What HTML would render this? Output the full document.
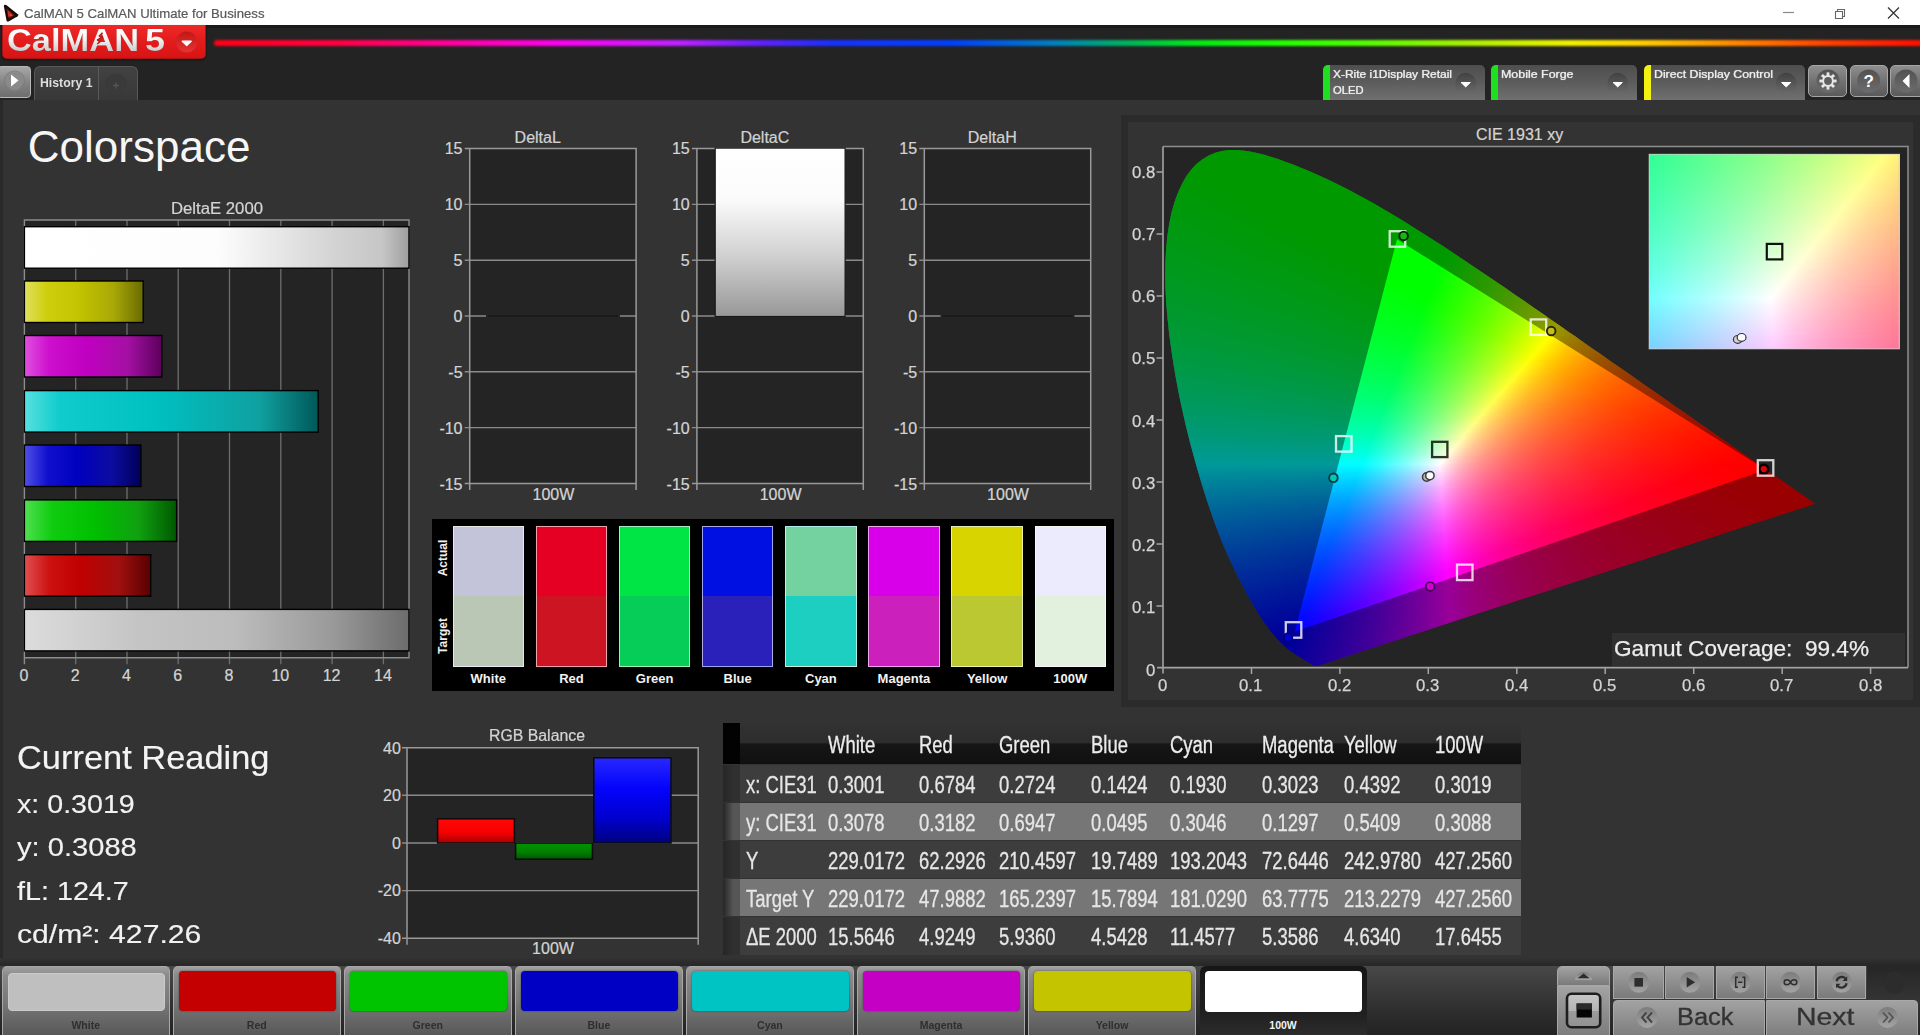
<!DOCTYPE html>
<html><head><meta charset="utf-8"><title>CalMAN 5</title><style>
html,body{margin:0;padding:0}
body{width:1920px;height:1035px;overflow:hidden;background:#333;position:relative;font-family:"Liberation Sans",sans-serif}
.a{position:absolute;box-sizing:border-box}
.t{position:absolute;white-space:nowrap;transform-origin:0 0;display:block;-webkit-text-stroke:.22px currentColor}
svg{position:absolute;left:0;top:0;overflow:visible}
.cie i{position:absolute;display:block}
</style></head>
<body>
<div class="a " style="left:0.0px;top:0.0px;width:1920.0px;height:25.0px;background:#fff"></div>
<svg width="1920" height="30"><path d="M3.8 6 Q4 4 6.3 5 L17.8 14.3 Q19 15.4 17.6 16.3 L8.6 21.5 Q7 22 6.5 20.4 Z" fill="#1c0a08"/><path d="M6.3 8 L14.8 15.2 L8.8 18.8 Z" fill="#6a1810"/><path d="M7.8 10.5l2.8 2.2-1 3.4-1.6 1z" fill="#d03020"/><path d="M10.2 13.2l2.6 2-3 1.6z" fill="#e85030"/><path d="M1783 12.5h11" stroke="#8a8a8a" stroke-width="1.2" fill="none"/><path d="M1835.5 11.5h7v7h-7z M1837.5 11.5v-2h7v7h-2" stroke="#666" stroke-width="1.1" fill="none"/><path d="M1888 7.5l11 11M1899 7.5l-11 11" stroke="#333" stroke-width="1.2" fill="none"/></svg>
<span class="t" style="left:24.0px;top:6.8px;font-size:13.3px;line-height:13.3px;color:#5a5a5a;transform:scaleX(0.9891);">CalMAN 5 CalMAN Ultimate for Business</span>
<div class="a " style="left:0.0px;top:25.0px;width:1920.0px;height:74.5px;background:#232323;border-top:3px solid #1a1a1a"></div>
<div class="a " style="left:214.0px;top:39.5px;width:1716.0px;height:6.5px;background:linear-gradient(90deg,#ff0018 0,#ff0040 7%,#ff00a0 14%,#ff00f0 20%,#c020ff 27%,#6020ff 32%,#1830ff 36%,#0040ff 43%,#0080c0 49%,#00b060 53%,#00e818 57%,#20ff00 62%,#50ff00 67%,#a8f000 73%,#f0f000 79%,#ffd000 83%,#ff9000 88%,#ff4000 94%,#ff0800 100%);filter:blur(1.1px);border-radius:3px"></div>
<div class="a " style="left:2.0px;top:25.0px;width:204.0px;height:34.0px;background:linear-gradient(#ee2828,#e41c1c 45%,#d81414);border-radius:0 0 5px 5px;border:1px solid #a81212;border-top:none;box-shadow:0 1px 2px rgba(0,0,0,.6)"></div>
<span class="t" style="left:7.0px;top:25.2px;font-size:31px;line-height:31px;color:rgba(80,0,0,.55);font-weight:bold;-webkit-text-stroke:0;transform:scaleX(1.1107);-webkit-text-stroke:0;">CalMAN</span>
<span class="t" style="left:145.0px;top:25.2px;font-size:31px;line-height:31px;color:rgba(80,0,0,.55);font-weight:bold;-webkit-text-stroke:0;transform:scaleX(1.1599);-webkit-text-stroke:0;">5</span>
<span class="t" style="left:7.0px;top:24.5px;font-size:31px;line-height:31px;color:transparent;font-weight:bold;-webkit-text-stroke:0;transform:scaleX(1.1107);background:linear-gradient(#fff 15%,#f4f4f4 45%,#c8c8c8 88%);-webkit-background-clip:text;background-clip:text;-webkit-text-stroke:0;">CalMAN</span>
<span class="t" style="left:145.0px;top:24.5px;font-size:31px;line-height:31px;color:transparent;font-weight:bold;-webkit-text-stroke:0;transform:scaleX(1.1599);background:linear-gradient(#fff 15%,#f4f4f4 45%,#c8c8c8 88%);-webkit-background-clip:text;background-clip:text;-webkit-text-stroke:0;">5</span>
<svg width="220" height="70"><defs><linearGradient id="lr" x1="0" y1="0" x2="0" y2="1"><stop offset="0" stop-color="#c41616"/><stop offset="1" stop-color="#e43434"/></linearGradient></defs><circle cx="186.7" cy="42" r="10.6" fill="url(#lr)"/><path d="M182.2 41.2l4.5 4.4 4.5-4.4z" fill="#fff" stroke="#fff" stroke-width="1.2" stroke-linejoin="round"/><path d="M102.6 32.8l-3.4 3.2 3.2 1.2-5 2.8 3 1.4-3.2 2.6" stroke="#b41c1c" stroke-width="1.5" fill="none" stroke-linejoin="round"/></svg>
<div class="a " style="left:-3.0px;top:65.5px;width:34.0px;height:32.0px;background:linear-gradient(#a8a8a8,#858585 50%,#6e6e6e);border:1px solid #b8b8b8;border-radius:4px"></div>
<svg width="40" height="100"><circle cx="14.5" cy="81" r="10.5" fill="#7c7c7c"/><circle cx="14.5" cy="80.3" r="9.5" fill="#8a8a8a"/><path d="M11 74.5l7.5 6-7.5 6z" fill="#fff"/></svg>
<div class="a " style="left:34.0px;top:65.5px;width:103.5px;height:34.0px;background:linear-gradient(#424242,#383838);border:1.5px solid #585858;border-bottom:none;border-radius:6px 6px 0 0"></div>
<div class="a " style="left:97.5px;top:66.5px;width:1.5px;height:33.0px;background:#5a5a5a"></div>
<span class="t" style="left:40.0px;top:77.0px;font-size:12.5px;line-height:12.5px;color:#dedede;font-weight:bold;-webkit-text-stroke:0;transform:scaleX(0.9814);">History 1</span>
<svg width="140" height="100"><circle cx="116" cy="84" r="10.5" fill="#3a3a3a"/><path d="M113 85.5h6M116 82.5v6" stroke="#555" stroke-width="1.3"/></svg>
<svg width="0" height="0"><defs><linearGradient id="cg" x1="0" y1="0" x2="0" y2="1"><stop offset="0" stop-color="#414141"/><stop offset="1" stop-color="#6a6a6a"/></linearGradient><linearGradient id="cg2" x1="0" y1="0" x2="0" y2="1"><stop offset="0" stop-color="#525252"/><stop offset="1" stop-color="#6c6c6c"/></linearGradient></defs></svg>
<div class="a " style="left:1323.3px;top:65.0px;width:161.4px;height:34.5px;background:linear-gradient(#4e4e4e,#5c5c5c 50%,#707070);border-radius:5px 5px 0 0;overflow:hidden"><div class="a" style="left:0;top:0;width:7px;height:35px;background:#1ee01e"></div></div>
<span class="t" style="left:1333.3px;top:68.9px;font-size:11.5px;line-height:11.5px;color:#eee;transform:scaleX(1.0403);text-shadow:0 0 1px #fff8;">X-Rite i1Display Retail</span>
<span class="t" style="left:1333.3px;top:85.1px;font-size:11.5px;line-height:11.5px;color:#eee;transform:scaleX(0.9739);text-shadow:0 0 1px #fff8;">OLED</span>
<svg width="1920" height="100"><circle cx="1465.7" cy="83.3" r="10.5" fill="url(#cg)"/><path d="M1461.1000000000001 82.5h9.2l-4.6 4.4z" fill="#fff" stroke="#fff" stroke-width="1" stroke-linejoin="round"/></svg>
<div class="a " style="left:1491.3px;top:65.0px;width:145.4px;height:34.5px;background:linear-gradient(#4e4e4e,#5c5c5c 50%,#707070);border-radius:5px 5px 0 0;overflow:hidden"><div class="a" style="left:0;top:0;width:7px;height:35px;background:#1ee01e"></div></div>
<span class="t" style="left:1501.3px;top:68.9px;font-size:11.5px;line-height:11.5px;color:#eee;transform:scaleX(1.0805);text-shadow:0 0 1px #fff8;">Mobile Forge</span>
<svg width="1920" height="100"><circle cx="1617.7" cy="83.3" r="10.5" fill="url(#cg)"/><path d="M1613.1000000000001 82.5h9.2l-4.6 4.4z" fill="#fff" stroke="#fff" stroke-width="1" stroke-linejoin="round"/></svg>
<div class="a " style="left:1644.2px;top:65.0px;width:161.0px;height:34.5px;background:linear-gradient(#4e4e4e,#5c5c5c 50%,#707070);border-radius:5px 5px 0 0;overflow:hidden"><div class="a" style="left:0;top:0;width:7px;height:35px;background:#f2f210"></div></div>
<span class="t" style="left:1654.2px;top:68.9px;font-size:11.5px;line-height:11.5px;color:#eee;transform:scaleX(1.0703);text-shadow:0 0 1px #fff8;">Direct Display Control</span>
<svg width="1920" height="100"><circle cx="1786.2" cy="83.3" r="10.5" fill="url(#cg)"/><path d="M1781.6000000000001 82.5h9.2l-4.6 4.4z" fill="#fff" stroke="#fff" stroke-width="1" stroke-linejoin="round"/></svg>
<div class="a " style="left:1808.3px;top:64.7px;width:39.2px;height:32.5px;background:linear-gradient(#8e8e8e,#727272 50%,#5a5a5a);border:1.5px solid #a6a6a6;border-radius:5px"></div>
<svg width="1930" height="100"><circle cx="1828" cy="81" r="11.5" fill="url(#cg2)"/><rect x="1826.6" y="72.4" width="2.8" height="3.4" fill="#e8e8e8" transform="rotate(0 1828 81)"/><rect x="1826.6" y="72.4" width="2.8" height="3.4" fill="#e8e8e8" transform="rotate(45 1828 81)"/><rect x="1826.6" y="72.4" width="2.8" height="3.4" fill="#e8e8e8" transform="rotate(90 1828 81)"/><rect x="1826.6" y="72.4" width="2.8" height="3.4" fill="#e8e8e8" transform="rotate(135 1828 81)"/><rect x="1826.6" y="72.4" width="2.8" height="3.4" fill="#e8e8e8" transform="rotate(180 1828 81)"/><rect x="1826.6" y="72.4" width="2.8" height="3.4" fill="#e8e8e8" transform="rotate(225 1828 81)"/><rect x="1826.6" y="72.4" width="2.8" height="3.4" fill="#e8e8e8" transform="rotate(270 1828 81)"/><rect x="1826.6" y="72.4" width="2.8" height="3.4" fill="#e8e8e8" transform="rotate(315 1828 81)"/><circle cx="1828" cy="81" r="4.9" fill="none" stroke="#e8e8e8" stroke-width="2"/></svg>
<div class="a " style="left:1849.7px;top:64.7px;width:38.1px;height:32.5px;background:linear-gradient(#8e8e8e,#727272 50%,#5a5a5a);border:1.5px solid #a6a6a6;border-radius:5px"></div>
<svg width="1930" height="100"><circle cx="1868.7" cy="81" r="11.5" fill="url(#cg2)"/></svg>
<span class="t" style="left:1863.5px;top:72.9px;font-size:17px;line-height:17px;color:#fff;font-weight:bold;-webkit-text-stroke:0;">?</span>
<div class="a " style="left:1890.0px;top:64.7px;width:36.0px;height:32.5px;background:linear-gradient(#8e8e8e,#727272 50%,#5a5a5a);border:1.5px solid #a6a6a6;border-radius:5px"></div>
<svg width="1930" height="100"><circle cx="1906" cy="81" r="11.5" fill="url(#cg2)"/><path d="M1909.5 74v14l-7-7z" fill="#fff"/></svg>
<div class="a " style="left:0.0px;top:99.5px;width:3.0px;height:859.0px;background:#292929"></div>
<span class="t" style="left:27.8px;top:124.8px;font-size:44px;line-height:44px;color:#f6f6f6;-webkit-text-stroke:0;">Colorspace</span>
<span class="t" style="left:170.5px;top:201.1px;font-size:16px;line-height:16px;color:#d4d4d4;transform:scaleX(1.0447);">DeltaE 2000</span>
<svg width="440" height="700"><rect x="24.4" y="220.0" width="384.6" height="437.79999999999995" fill="#242424"/><path d="M75.7 220.0V664.3" stroke="#6e6e6e" stroke-width="1.3"/><path d="M127.0 220.0V664.3" stroke="#6e6e6e" stroke-width="1.3"/><path d="M178.2 220.0V664.3" stroke="#6e6e6e" stroke-width="1.3"/><path d="M229.5 220.0V664.3" stroke="#6e6e6e" stroke-width="1.3"/><path d="M280.8 220.0V664.3" stroke="#6e6e6e" stroke-width="1.3"/><path d="M332.1 220.0V664.3" stroke="#6e6e6e" stroke-width="1.3"/><path d="M383.4 220.0V664.3" stroke="#6e6e6e" stroke-width="1.3"/><path d="M24.4 664.3V220.0H409.0V657.8H24.4" fill="none" stroke="#8c8c8c" stroke-width="1.4"/><defs>
<linearGradient id="gw"><stop offset="0" stop-color="#fff"/><stop offset=".5" stop-color="#fdfdfd"/><stop offset=".8" stop-color="#d4d4d4"/><stop offset=".93" stop-color="#c6c6c6"/><stop offset="1" stop-color="#9e9e9e"/></linearGradient>
<linearGradient id="gy"><stop offset="0" stop-color="#e0e060"/><stop offset=".18" stop-color="#cfcf10"/><stop offset=".45" stop-color="#c4c400"/><stop offset=".75" stop-color="#a8a808"/><stop offset="1" stop-color="#6a6a00"/></linearGradient>
<linearGradient id="gm"><stop offset="0" stop-color="#e050e0"/><stop offset=".18" stop-color="#cc10cc"/><stop offset=".45" stop-color="#c000c0"/><stop offset=".75" stop-color="#a410a4"/><stop offset="1" stop-color="#5c005c"/></linearGradient>
<linearGradient id="gc"><stop offset="0" stop-color="#58e0e0"/><stop offset=".12" stop-color="#10cccc"/><stop offset=".45" stop-color="#00c0c0"/><stop offset=".8" stop-color="#10a0a0"/><stop offset="1" stop-color="#005858"/></linearGradient>
<linearGradient id="gb"><stop offset="0" stop-color="#5050e8"/><stop offset=".2" stop-color="#1010cc"/><stop offset=".45" stop-color="#0000c0"/><stop offset=".75" stop-color="#0c0ca0"/><stop offset="1" stop-color="#000058"/></linearGradient>
<linearGradient id="gg"><stop offset="0" stop-color="#50e050"/><stop offset=".18" stop-color="#10cc10"/><stop offset=".45" stop-color="#00c000"/><stop offset=".75" stop-color="#10a010"/><stop offset="1" stop-color="#005800"/></linearGradient>
<linearGradient id="gr"><stop offset="0" stop-color="#e05050"/><stop offset=".2" stop-color="#cc1010"/><stop offset=".45" stop-color="#c00000"/><stop offset=".75" stop-color="#a01010"/><stop offset="1" stop-color="#580000"/></linearGradient>
<linearGradient id="gs"><stop offset="0" stop-color="#dcdcdc"/><stop offset=".3" stop-color="#c4c4c4"/><stop offset=".55" stop-color="#bcbcbc"/><stop offset=".8" stop-color="#9a9a9a"/><stop offset="1" stop-color="#6c6c6c"/></linearGradient>
</defs><rect x="24.4" y="226.7" width="384.6" height="41.5" fill="url(#gw)" stroke="#000" stroke-width="1.4"/><rect x="24.4" y="281.0" width="118.8" height="41.5" fill="url(#gy)" stroke="#000" stroke-width="1.4"/><rect x="24.4" y="335.5" width="137.4" height="41.5" fill="url(#gm)" stroke="#000" stroke-width="1.4"/><rect x="24.4" y="390.6" width="293.8" height="41.5" fill="url(#gc)" stroke="#000" stroke-width="1.4"/><rect x="24.4" y="445.0" width="116.5" height="41.5" fill="url(#gb)" stroke="#000" stroke-width="1.4"/><rect x="24.4" y="499.9" width="152.2" height="41.5" fill="url(#gg)" stroke="#000" stroke-width="1.4"/><rect x="24.4" y="554.7" width="126.3" height="41.5" fill="url(#gr)" stroke="#000" stroke-width="1.4"/><rect x="24.4" y="609.4" width="384.6" height="41.5" fill="url(#gs)" stroke="#000" stroke-width="1.4"/></svg>
<span class="t" style="left:19.5px;top:667.9px;font-size:16px;line-height:16px;color:#d4d4d4;">0</span>
<span class="t" style="left:70.7px;top:667.9px;font-size:16px;line-height:16px;color:#d4d4d4;">2</span>
<span class="t" style="left:122.0px;top:667.9px;font-size:16px;line-height:16px;color:#d4d4d4;">4</span>
<span class="t" style="left:173.3px;top:667.9px;font-size:16px;line-height:16px;color:#d4d4d4;">6</span>
<span class="t" style="left:224.6px;top:667.9px;font-size:16px;line-height:16px;color:#d4d4d4;">8</span>
<span class="t" style="left:271.4px;top:667.9px;font-size:16px;line-height:16px;color:#d4d4d4;">10</span>
<span class="t" style="left:322.7px;top:667.9px;font-size:16px;line-height:16px;color:#d4d4d4;">12</span>
<span class="t" style="left:374.0px;top:667.9px;font-size:16px;line-height:16px;color:#d4d4d4;">14</span>
<svg width="1200" height="520"><rect x="469.7" y="148.6" width="166.40000000000003" height="334.79999999999995" fill="#242424"/><path d="M464.7 204.4H636.1" stroke="#8a8a8a" stroke-width="1.4"/><path d="M464.7 260.2H636.1" stroke="#8a8a8a" stroke-width="1.4"/><path d="M464.7 316.0H636.1" stroke="#8a8a8a" stroke-width="1.4"/><path d="M464.7 371.8H636.1" stroke="#8a8a8a" stroke-width="1.4"/><path d="M464.7 427.6H636.1" stroke="#8a8a8a" stroke-width="1.4"/><path d="M464.7 148.6H636.1V489.9M464.7 483.4H636.1M469.7 148.6V489.9" fill="none" stroke="#999" stroke-width="1.5"/><path d="M486.0 316.0H619.9" stroke="#242424" stroke-width="3"/><path d="M488.0 316.0H617.9" stroke="#171717" stroke-width="1.5"/></svg>
<span class="t" style="left:444.7px;top:141.1px;font-size:16px;line-height:16px;color:#d4d4d4;">15</span>
<span class="t" style="left:444.7px;top:197.1px;font-size:16px;line-height:16px;color:#d4d4d4;">10</span>
<span class="t" style="left:453.6px;top:253.2px;font-size:16px;line-height:16px;color:#d4d4d4;">5</span>
<span class="t" style="left:453.6px;top:309.2px;font-size:16px;line-height:16px;color:#d4d4d4;">0</span>
<span class="t" style="left:448.3px;top:365.3px;font-size:16px;line-height:16px;color:#d4d4d4;">-5</span>
<span class="t" style="left:439.4px;top:421.3px;font-size:16px;line-height:16px;color:#d4d4d4;">-10</span>
<span class="t" style="left:439.4px;top:477.4px;font-size:16px;line-height:16px;color:#d4d4d4;">-15</span>
<span class="t" style="left:514.6px;top:129.8px;font-size:16px;line-height:16px;color:#d2d2d2;">DeltaL</span>
<span class="t" style="left:532.5px;top:487.3px;font-size:16px;line-height:16px;color:#d4d4d4;">100W</span>
<svg width="1200" height="520"><rect x="696.9" y="148.6" width="166.39999999999998" height="334.79999999999995" fill="#242424"/><path d="M691.9 204.4H863.3" stroke="#8a8a8a" stroke-width="1.4"/><path d="M691.9 260.2H863.3" stroke="#8a8a8a" stroke-width="1.4"/><path d="M691.9 316.0H863.3" stroke="#8a8a8a" stroke-width="1.4"/><path d="M691.9 371.8H863.3" stroke="#8a8a8a" stroke-width="1.4"/><path d="M691.9 427.6H863.3" stroke="#8a8a8a" stroke-width="1.4"/><path d="M691.9 148.6H863.3V489.9M691.9 483.4H863.3M696.9 148.6V489.9" fill="none" stroke="#999" stroke-width="1.5"/><defs><linearGradient id="gdc" x1="0" y1="0" x2="0" y2="1"><stop offset="0" stop-color="#fff"/><stop offset=".3" stop-color="#fbfbfb"/><stop offset=".65" stop-color="#cfcfcf"/><stop offset="1" stop-color="#979797"/></linearGradient></defs><rect x="715.1999999999999" y="148.1" width="129.89999999999998" height="168.4" fill="url(#gdc)" stroke="#1a1a1a" stroke-width="1.2"/></svg>
<span class="t" style="left:671.9px;top:141.1px;font-size:16px;line-height:16px;color:#d4d4d4;">15</span>
<span class="t" style="left:671.9px;top:197.1px;font-size:16px;line-height:16px;color:#d4d4d4;">10</span>
<span class="t" style="left:680.8px;top:253.2px;font-size:16px;line-height:16px;color:#d4d4d4;">5</span>
<span class="t" style="left:680.8px;top:309.2px;font-size:16px;line-height:16px;color:#d4d4d4;">0</span>
<span class="t" style="left:675.5px;top:365.3px;font-size:16px;line-height:16px;color:#d4d4d4;">-5</span>
<span class="t" style="left:666.6px;top:421.3px;font-size:16px;line-height:16px;color:#d4d4d4;">-10</span>
<span class="t" style="left:666.6px;top:477.4px;font-size:16px;line-height:16px;color:#d4d4d4;">-15</span>
<span class="t" style="left:740.4px;top:129.8px;font-size:16px;line-height:16px;color:#d2d2d2;">DeltaC</span>
<span class="t" style="left:759.7px;top:487.3px;font-size:16px;line-height:16px;color:#d4d4d4;">100W</span>
<svg width="1200" height="520"><rect x="924.3" y="148.6" width="166.4000000000001" height="334.79999999999995" fill="#242424"/><path d="M919.3 204.4H1090.7" stroke="#8a8a8a" stroke-width="1.4"/><path d="M919.3 260.2H1090.7" stroke="#8a8a8a" stroke-width="1.4"/><path d="M919.3 316.0H1090.7" stroke="#8a8a8a" stroke-width="1.4"/><path d="M919.3 371.8H1090.7" stroke="#8a8a8a" stroke-width="1.4"/><path d="M919.3 427.6H1090.7" stroke="#8a8a8a" stroke-width="1.4"/><path d="M919.3 148.6H1090.7V489.9M919.3 483.4H1090.7M924.3 148.6V489.9" fill="none" stroke="#999" stroke-width="1.5"/><path d="M940.5999999999999 316.0H1074.5" stroke="#242424" stroke-width="3"/><path d="M942.5999999999999 316.0H1072.5" stroke="#171717" stroke-width="1.5"/></svg>
<span class="t" style="left:899.3px;top:141.1px;font-size:16px;line-height:16px;color:#d4d4d4;">15</span>
<span class="t" style="left:899.3px;top:197.1px;font-size:16px;line-height:16px;color:#d4d4d4;">10</span>
<span class="t" style="left:908.2px;top:253.2px;font-size:16px;line-height:16px;color:#d4d4d4;">5</span>
<span class="t" style="left:908.2px;top:309.2px;font-size:16px;line-height:16px;color:#d4d4d4;">0</span>
<span class="t" style="left:902.9px;top:365.3px;font-size:16px;line-height:16px;color:#d4d4d4;">-5</span>
<span class="t" style="left:894.0px;top:421.3px;font-size:16px;line-height:16px;color:#d4d4d4;">-10</span>
<span class="t" style="left:894.0px;top:477.4px;font-size:16px;line-height:16px;color:#d4d4d4;">-15</span>
<span class="t" style="left:967.8px;top:129.8px;font-size:16px;line-height:16px;color:#d2d2d2;">DeltaH</span>
<span class="t" style="left:987.1px;top:487.3px;font-size:16px;line-height:16px;color:#d4d4d4;">100W</span>
<div class="a " style="left:432.0px;top:518.5px;width:682.0px;height:172.5px;background:#000"></div>
<div class="a " style="left:452.6px;top:526.2px;width:71.4px;height:140.6px;background:linear-gradient(#c3c4d9 0,#c3c4d9 49.3%,#b9c7b4 49.7%,#b9c7b4 100%);border:1.5px solid rgba(255,255,255,.62)"></div>
<span class="t" style="left:470.6px;top:671.6px;font-size:13px;line-height:13px;color:#f2f2f2;font-weight:bold;-webkit-text-stroke:0;">White</span>
<div class="a " style="left:535.7px;top:526.2px;width:71.4px;height:140.6px;background:linear-gradient(#e50023 0,#e50023 49.3%,#cd1423 49.7%,#cd1423 100%);border:1.5px solid rgba(255,255,255,.62)"></div>
<span class="t" style="left:559.2px;top:671.6px;font-size:13px;line-height:13px;color:#f2f2f2;font-weight:bold;-webkit-text-stroke:0;">Red</span>
<div class="a " style="left:618.9px;top:526.2px;width:71.4px;height:140.6px;background:linear-gradient(#00e546 0,#00e546 49.3%,#06cd58 49.7%,#06cd58 100%);border:1.5px solid rgba(255,255,255,.62)"></div>
<span class="t" style="left:635.8px;top:671.6px;font-size:13px;line-height:13px;color:#f2f2f2;font-weight:bold;-webkit-text-stroke:0;">Green</span>
<div class="a " style="left:702.0px;top:526.2px;width:71.4px;height:140.6px;background:linear-gradient(#0010e2 0,#0010e2 49.3%,#2921b9 49.7%,#2921b9 100%);border:1.5px solid rgba(255,255,255,.62)"></div>
<span class="t" style="left:723.6px;top:671.6px;font-size:13px;line-height:13px;color:#f2f2f2;font-weight:bold;-webkit-text-stroke:0;">Blue</span>
<div class="a " style="left:785.2px;top:526.2px;width:71.4px;height:140.6px;background:linear-gradient(#74d1a0 0,#74d1a0 49.3%,#1ccfc0 49.7%,#1ccfc0 100%);border:1.5px solid rgba(255,255,255,.62)"></div>
<span class="t" style="left:805.0px;top:671.6px;font-size:13px;line-height:13px;color:#f2f2f2;font-weight:bold;-webkit-text-stroke:0;">Cyan</span>
<div class="a " style="left:868.3px;top:526.2px;width:71.4px;height:140.6px;background:linear-gradient(#d800e8 0,#d800e8 49.3%,#cc20bd 49.7%,#cc20bd 100%);border:1.5px solid rgba(255,255,255,.62)"></div>
<span class="t" style="left:877.6px;top:671.6px;font-size:13px;line-height:13px;color:#f2f2f2;font-weight:bold;-webkit-text-stroke:0;">Magenta</span>
<div class="a " style="left:951.4px;top:526.2px;width:71.4px;height:140.6px;background:linear-gradient(#d8d400 0,#d8d400 49.3%,#bcc832 49.7%,#bcc832 100%);border:1.5px solid rgba(255,255,255,.62)"></div>
<span class="t" style="left:966.9px;top:671.6px;font-size:13px;line-height:13px;color:#f2f2f2;font-weight:bold;-webkit-text-stroke:0;">Yellow</span>
<div class="a " style="left:1034.6px;top:526.2px;width:71.4px;height:140.6px;background:linear-gradient(#ecebfd 0,#ecebfd 49.3%,#e2f0de 49.7%,#e2f0de 100%);border:1.5px solid rgba(255,255,255,.62)"></div>
<span class="t" style="left:1053.3px;top:671.6px;font-size:13px;line-height:13px;color:#f2f2f2;font-weight:bold;-webkit-text-stroke:0;">100W</span>
<span class="t" style="left:435px;top:550.5px;font-size:12px;line-height:14px;color:#f0f0f0;font-weight:bold;-webkit-text-stroke:0;transform:rotate(-90deg);transform-origin:50% 50%;width:40px;margin-left:-12px;text-align:center">Actual</span>
<span class="t" style="left:435px;top:628.5px;font-size:12px;line-height:14px;color:#f0f0f0;font-weight:bold;-webkit-text-stroke:0;transform:rotate(-90deg);transform-origin:50% 50%;width:40px;margin-left:-12px;text-align:center">Target</span>
<div class="a " style="left:1120.5px;top:114.5px;width:800.0px;height:592.0px;border:7px solid #2b2b2b;border-right-width:8px"></div>
<span class="t" style="left:1476.0px;top:126.9px;font-size:16px;line-height:16px;color:#d4d4d4;">CIE 1931 xy</span>
<div class="a " style="left:1163.0px;top:146.5px;width:745.0px;height:521.1px;background:#242424"></div>
<div class="a cie" style="left:1163px;top:146px;width:745px;height:522px;clip-path:path('M154.2 519.9L153.3 520.0L152.3 520.0L151.3 519.8L150.4 519.4L149.7 519.1L149.2 518.8L148.6 518.4L147.9 518.0L147.1 517.5L146.3 517.0L145.4 516.4L144.4 515.8L143.8 515.4L143.3 515.1L142.6 514.7L142.0 514.3L141.3 513.9L140.5 513.4L139.7 512.9L138.9 512.4L138.0 511.9L137.1 511.3L136.2 510.7L135.1 510.1L134.1 509.4L133.0 508.7L131.8 508.0L130.6 507.2L129.4 506.3L128.1 505.4L126.7 504.4L125.3 503.3L123.9 502.2L122.4 500.9L120.8 499.6L119.2 498.0L117.4 496.2L115.5 494.2L113.4 492.0L111.3 489.5L109.0 486.8L106.6 483.8L104.2 480.5L101.6 477.0L98.9 473.0L96.1 468.7L93.1 463.9L90.0 458.7L86.8 453.0L83.4 446.9L79.9 440.2L76.1 433.0L72.2 425.2L68.2 416.8L64.0 407.7L59.8 397.9L55.7 387.5L51.5 376.5L47.4 364.8L43.3 352.4L39.2 339.4L35.1 325.8L31.1 311.5L27.1 296.8L23.3 281.7L19.8 266.3L16.4 250.8L13.4 235.1L10.7 219.5L8.3 203.8L6.2 188.3L4.6 173.0L3.3 158.1L2.5 143.6L2.2 129.5L2.4 116.0L3.1 102.9L4.3 90.3L6.1 78.3L8.4 67.0L11.3 56.6L14.8 46.9L18.8 38.2L23.3 30.3L28.3 23.5L33.7 17.8L39.5 13.2L45.7 9.5L52.1 6.8L58.8 5.0L65.6 4.0L72.6 3.9L79.7 4.4L86.8 5.4L94.0 6.9L101.2 8.8L108.5 10.9L115.8 13.3L123.0 15.9L130.2 18.6L137.2 21.4L144.2 24.3L151.0 27.2L157.7 30.2L164.4 33.3L171.0 36.5L177.6 39.7L184.2 43.1L190.7 46.4L197.1 49.9L203.6 53.4L210.0 57.0L216.4 60.7L222.8 64.4L229.2 68.2L235.6 72.1L242.0 75.9L248.3 79.9L254.6 83.9L261.0 87.9L267.3 91.9L273.6 96.0L280.0 100.1L286.3 104.3L292.6 108.5L299.0 112.7L305.3 116.9L311.6 121.2L317.9 125.4L324.3 129.7L330.6 134.0L336.9 138.3L343.2 142.6L349.5 147.0L355.8 151.3L362.1 155.6L368.4 160.0L374.6 164.3L380.9 168.6L387.1 172.9L393.3 177.3L399.5 181.6L405.7 185.9L411.9 190.1L418.0 194.4L424.0 198.7L430.1 202.9L436.1 207.1L442.1 211.3L448.0 215.4L453.9 219.5L459.7 223.6L465.5 227.6L471.2 231.6L476.8 235.5L482.4 239.4L488.0 243.3L493.4 247.1L498.8 250.8L504.1 254.5L509.3 258.2L514.4 261.7L519.5 265.3L524.4 268.7L529.2 272.1L533.9 275.4L538.4 278.5L542.8 281.6L547.0 284.5L551.1 287.4L555.2 290.2L559.2 293.0L563.0 295.7L566.8 298.3L570.4 300.9L573.9 303.3L577.3 305.6L580.5 307.9L583.6 310.0L586.6 312.1L589.4 314.1L592.2 316.0L594.8 317.9L597.4 319.6L599.8 321.3L602.1 322.9L604.3 324.5L606.4 326.0L608.4 327.4L610.4 328.7L612.2 330.0L614.0 331.2L615.6 332.4L617.2 333.5L618.8 334.6L620.3 335.6L621.7 336.6L623.0 337.5L624.3 338.4L625.5 339.3L626.7 340.1L627.9 340.9L629.0 341.7L630.1 342.5L631.1 343.2L632.1 343.9L633.1 344.6L634.0 345.2L634.9 345.8L635.7 346.4L636.6 347.0L637.3 347.5L638.1 348.1L638.8 348.6L639.5 349.0L640.1 349.5L640.7 349.9L641.2 350.3L641.8 350.6L642.2 351.0L643.2 351.6L644.0 352.2L644.7 352.7L645.4 353.2L646.0 353.6L646.5 353.9L647.1 354.3L647.6 354.7L648.2 355.1L648.7 355.5L649.2 355.8L649.7 356.2L651.9 357.7Z')"><i style="left:65px;top:2px;width:12px;height:2px;background:linear-gradient(90deg,#00ff00,#00ff00)"></i>
<i style="left:53px;top:4px;width:39px;height:2px;background:linear-gradient(90deg,#00ff00,#00ff00)"></i>
<i style="left:47px;top:6px;width:54px;height:2px;background:linear-gradient(90deg,#00ff00,#00ff00)"></i>
<i style="left:42px;top:8px;width:66px;height:2px;background:linear-gradient(90deg,#00ff00,#00ff00)"></i>
<i style="left:39px;top:10px;width:75px;height:2px;background:linear-gradient(90deg,#00ff00,#00ff00)"></i>
<i style="left:36px;top:12px;width:84px;height:2px;background:linear-gradient(90deg,#00ff00,#00ff00)"></i>
<i style="left:33px;top:14px;width:93px;height:2px;background:linear-gradient(90deg,#00ff00,#00ff00)"></i>
<i style="left:31px;top:16px;width:100px;height:2px;background:linear-gradient(90deg,#00ff00,#00ff00)"></i>
<i style="left:29px;top:18px;width:107px;height:2px;background:linear-gradient(90deg,#00ff00,#00ff00)"></i>
<i style="left:27px;top:20px;width:114px;height:2px;background:linear-gradient(90deg,#00ff01,#00ff00)"></i>
<i style="left:25px;top:22px;width:121px;height:2px;background:linear-gradient(90deg,#00ff02,#00ff00)"></i>
<i style="left:24px;top:24px;width:127px;height:2px;background:linear-gradient(90deg,#00ff03,#00ff00)"></i>
<i style="left:23px;top:26px;width:132px;height:2px;background:linear-gradient(90deg,#00ff04,#00ff00 19px,#00ff00)"></i>
<i style="left:21px;top:28px;width:139px;height:2px;background:linear-gradient(90deg,#00ff05,#00ff00 25px,#00ff00)"></i>
<i style="left:20px;top:30px;width:144px;height:2px;background:linear-gradient(90deg,#00ff06,#00ff00 30px,#00ff00)"></i>
<i style="left:19px;top:32px;width:149px;height:2px;background:linear-gradient(90deg,#00ff07,#00ff00 34px,#00ff00)"></i>
<i style="left:18px;top:34px;width:155px;height:2px;background:linear-gradient(90deg,#00ff08,#00ff00 39px,#00ff00)"></i>
<i style="left:16px;top:36px;width:161px;height:2px;background:linear-gradient(90deg,#00ff09,#00ff00 44px,#00ff00)"></i>
<i style="left:15px;top:38px;width:166px;height:2px;background:linear-gradient(90deg,#00ff0a,#00ff00 49px,#00ff00)"></i>
<i style="left:15px;top:40px;width:170px;height:2px;background:linear-gradient(90deg,#00ff0b,#00ff00 53px,#00ff00)"></i>
<i style="left:14px;top:42px;width:174px;height:2px;background:linear-gradient(90deg,#00ff0c,#00ff00 57px,#00ff00)"></i>
<i style="left:13px;top:44px;width:179px;height:2px;background:linear-gradient(90deg,#00ff0d,#00ff00 62px,#00ff00)"></i>
<i style="left:12px;top:46px;width:184px;height:2px;background:linear-gradient(90deg,#00ff0e,#00ff00 66px,#00ff00)"></i>
<i style="left:11px;top:48px;width:189px;height:2px;background:linear-gradient(90deg,#00ff0f,#00ff00 71px,#00ff00)"></i>
<i style="left:10px;top:50px;width:193px;height:2px;background:linear-gradient(90deg,#00ff10,#00ff00 76px,#00ff00)"></i>
<i style="left:10px;top:52px;width:197px;height:2px;background:linear-gradient(90deg,#00ff11,#00ff00 79px,#00ff00)"></i>
<i style="left:9px;top:54px;width:202px;height:2px;background:linear-gradient(90deg,#00ff12,#00ff00 84px,#00ff00)"></i>
<i style="left:8px;top:56px;width:206px;height:2px;background:linear-gradient(90deg,#00ff13,#00ff00 89px,#00ff00)"></i>
<i style="left:8px;top:58px;width:210px;height:2px;background:linear-gradient(90deg,#00ff13,#00ff00 92px,#00ff00)"></i>
<i style="left:7px;top:60px;width:214px;height:2px;background:linear-gradient(90deg,#00ff14,#00ff00 97px,#00ff00)"></i>
<i style="left:7px;top:62px;width:218px;height:2px;background:linear-gradient(90deg,#00ff15,#00ff00 100px,#00ff00)"></i>
<i style="left:6px;top:64px;width:222px;height:2px;background:linear-gradient(90deg,#00ff16,#00ff00 105px,#00ff00)"></i>
<i style="left:6px;top:66px;width:225px;height:2px;background:linear-gradient(90deg,#00ff17,#00ff00 109px,#00ff00)"></i>
<i style="left:5px;top:68px;width:230px;height:2px;background:linear-gradient(90deg,#00ff18,#00ff00 113px,#00ff00)"></i>
<i style="left:5px;top:70px;width:233px;height:2px;background:linear-gradient(90deg,#00ff19,#00ff00 117px,#00ff00)"></i>
<i style="left:4px;top:72px;width:237px;height:2px;background:linear-gradient(90deg,#00ff1a,#00ff00 121px,#00ff00)"></i>
<i style="left:4px;top:74px;width:241px;height:2px;background:linear-gradient(90deg,#00ff1b,#00ff00 125px,#00ff00)"></i>
<i style="left:4px;top:76px;width:244px;height:2px;background:linear-gradient(90deg,#00ff1c,#00ff00 129px,#00ff00)"></i>
<i style="left:3px;top:78px;width:248px;height:2px;background:linear-gradient(90deg,#00ff1d,#00ff00 133px,#00ff00)"></i>
<i style="left:3px;top:80px;width:251px;height:2px;background:linear-gradient(90deg,#00ff1e,#00ff00 137px,#00ff00)"></i>
<i style="left:3px;top:82px;width:254px;height:2px;background:linear-gradient(90deg,#00ff1f,#00ff00 140px,#00ff00)"></i>
<i style="left:2px;top:84px;width:259px;height:2px;background:linear-gradient(90deg,#00ff20,#00ff00 145px,#00ff00)"></i>
<i style="left:2px;top:86px;width:262px;height:2px;background:linear-gradient(90deg,#00ff21,#00ff00 149px,#00ff00)"></i>
<i style="left:2px;top:88px;width:265px;height:2px;background:linear-gradient(90deg,#00ff22,#00ff00 152px,#00ff00)"></i>
<i style="left:2px;top:90px;width:268px;height:2px;background:linear-gradient(90deg,#00ff23,#00ff00 156px,#00ff00)"></i>
<i style="left:1px;top:92px;width:272px;height:2px;background:linear-gradient(90deg,#00ff24,#00ff00 160px,#00ff00)"></i>
<i style="left:1px;top:94px;width:275px;height:2px;background:linear-gradient(90deg,#00ff25,#00ff00 164px,#00ff00)"></i>
<i style="left:1px;top:96px;width:278px;height:2px;background:linear-gradient(90deg,#00ff26,#00ff00 168px,#00ff00)"></i>
<i style="left:1px;top:98px;width:281px;height:2px;background:linear-gradient(90deg,#00ff27,#00ff00 171px,#00ff00)"></i>
<i style="left:1px;top:100px;width:284px;height:2px;background:linear-gradient(90deg,#00ff28,#00ff00 175px,#00ff00)"></i>
<i style="left:1px;top:102px;width:287px;height:2px;background:linear-gradient(90deg,#00ff29,#00ff00 179px,#00ff00 283px,#05ff00)"></i>
<i style="left:0px;top:104px;width:291px;height:2px;background:linear-gradient(90deg,#00ff2a,#00ff00 183px,#00ff00 283px,#09ff00)"></i>
<i style="left:0px;top:106px;width:294px;height:2px;background:linear-gradient(90deg,#00ff2b,#00ff00 187px,#00ff00 282px,#0dff00)"></i>
<i style="left:0px;top:108px;width:297px;height:2px;background:linear-gradient(90deg,#00ff2c,#00ff00 190px,#00ff00 282px,#12ff00)"></i>
<i style="left:0px;top:110px;width:300px;height:2px;background:linear-gradient(90deg,#00ff2d,#00ff00 194px,#00ff00 281px,#17ff00)"></i>
<i style="left:0px;top:112px;width:303px;height:2px;background:linear-gradient(90deg,#00ff2e,#00ff00 198px,#00ff00 280px,#1bff00)"></i>
<i style="left:0px;top:114px;width:306px;height:2px;background:linear-gradient(90deg,#00ff2f,#00ff19 107px,#00ff00 201px,#00ff00 279px,#20ff00)"></i>
<i style="left:0px;top:116px;width:309px;height:2px;background:linear-gradient(90deg,#00ff30,#00ff1b 103px,#00ff00 205px,#00ff00 278px,#25ff00)"></i>
<i style="left:0px;top:118px;width:312px;height:2px;background:linear-gradient(90deg,#00ff31,#00ff19 116px,#00ff00 208px,#00ff00 278px,#2aff00)"></i>
<i style="left:0px;top:120px;width:315px;height:2px;background:linear-gradient(90deg,#00ff32,#00ff1c 108px,#00ff00 212px,#00ff00 277px,#2fff00)"></i>
<i style="left:0px;top:122px;width:318px;height:2px;background:linear-gradient(90deg,#00ff33,#00ff1a 121px,#00ff00 216px,#00ff00 276px,#35ff00)"></i>
<i style="left:0px;top:124px;width:321px;height:2px;background:linear-gradient(90deg,#00ff34,#00ff1d 113px,#00ff00 219px,#00ff00 275px,#3aff00)"></i>
<i style="left:0px;top:126px;width:324px;height:2px;background:linear-gradient(90deg,#00ff35,#00ff1c 122px,#00ff00 223px,#00ff00 274px,#40ff00)"></i>
<i style="left:0px;top:128px;width:327px;height:2px;background:linear-gradient(90deg,#00ff37,#00ff1f 114px,#00ff00 226px,#00ff00 274px,#45ff00)"></i>
<i style="left:0px;top:130px;width:330px;height:2px;background:linear-gradient(90deg,#00ff38,#00ff1e 123px,#00ff00 230px,#00ff00 273px,#4bff00)"></i>
<i style="left:0px;top:132px;width:333px;height:2px;background:linear-gradient(90deg,#00ff39,#00ff1c 136px,#00ff00 234px,#00ff00 272px,#51ff00)"></i>
<i style="left:0px;top:134px;width:336px;height:2px;background:linear-gradient(90deg,#00ff3a,#00ff22 116px,#00ff00 237px,#00ff00 271px,#57ff00)"></i>
<i style="left:0px;top:136px;width:339px;height:2px;background:linear-gradient(90deg,#00ff3b,#00ff22 121px,#00ff00 241px,#00ff00 270px,#5dff00)"></i>
<i style="left:0px;top:138px;width:342px;height:2px;background:linear-gradient(90deg,#00ff3c,#00ff22 126px,#00ff00 245px,#00ff00 270px,#63ff00)"></i>
<i style="left:0px;top:140px;width:345px;height:2px;background:linear-gradient(90deg,#00ff3e,#00ff20 139px,#00ff00 248px,#00ff00 269px,#2fff00 305px,#6aff00)"></i>
<i style="left:0px;top:142px;width:348px;height:2px;background:linear-gradient(90deg,#00ff3f,#00ff28 111px,#00ff00 252px,#00ff00 268px,#3dff00 314px,#71ff00)"></i>
<i style="left:0px;top:144px;width:351px;height:2px;background:linear-gradient(90deg,#00ff40,#00ff29 112px,#00ff00 255px,#00ff00 267px,#36ff00 308px,#77ff00)"></i>
<i style="left:0px;top:146px;width:354px;height:2px;background:linear-gradient(90deg,#00ff41,#00ff2a 113px,#00ff00 266px,#43ff00 316px,#7eff00)"></i>
<i style="left:0px;top:148px;width:356px;height:2px;background:linear-gradient(90deg,#00ff42,#00ff2b 114px,#00ff00 266px,#39ff00 308px,#84ff00)"></i>
<i style="left:0px;top:150px;width:359px;height:2px;background:linear-gradient(90deg,#00ff44,#00ff20 163px,#00ff01 265px,#39ff00 307px,#8bff00)"></i>
<i style="left:0px;top:152px;width:362px;height:2px;background:linear-gradient(90deg,#00ff45,#00ff25 149px,#00ff02 264px,#3fff00 310px,#93ff00)"></i>
<i style="left:1px;top:154px;width:364px;height:2px;background:linear-gradient(90deg,#00ff46,#00ff25 153px,#00ff04 262px,#0dff00 272px,#59ff00 325px,#9aff00)"></i>
<i style="left:1px;top:156px;width:367px;height:2px;background:linear-gradient(90deg,#00ff47,#00ff30 114px,#00ff06 261px,#13ff00 276px,#53ff00 320px,#a2ff00)"></i>
<i style="left:1px;top:158px;width:370px;height:2px;background:linear-gradient(90deg,#00ff49,#00ff2b 140px,#00ff07 261px,#1aff00 280px,#4dff00 315px,#aaff00)"></i>
<i style="left:1px;top:160px;width:373px;height:2px;background:linear-gradient(90deg,#00ff4a,#00ff2c 141px,#00ff09 260px,#20ff00 283px,#55ff00 319px,#b3ff00)"></i>
<i style="left:1px;top:162px;width:376px;height:2px;background:linear-gradient(90deg,#00ff4b,#00ff28 162px,#00ff0a 259px,#27ff00 287px,#4fff00 314px,#bbff00)"></i>
<i style="left:1px;top:164px;width:379px;height:2px;background:linear-gradient(90deg,#00ff4d,#00ff2b 156px,#00ff0c 258px,#2dff00 290px,#5cff00 321px,#c4ff00)"></i>
<i style="left:1px;top:166px;width:382px;height:2px;background:linear-gradient(90deg,#00ff4e,#00ff34 126px,#00ff0e 257px,#34ff00 294px,#59ff00 318px,#97ff00 354px,#cdff00)"></i>
<i style="left:2px;top:168px;width:383px;height:2px;background:linear-gradient(90deg,#00ff4f,#00ff39 110px,#00ff0f 256px,#3cff00 297px,#6fff00 329px,#d4ff00)"></i>
<i style="left:2px;top:170px;width:386px;height:2px;background:linear-gradient(90deg,#00ff51,#00ff2e 160px,#00ff11 255px,#42ff00 300px,#6cff00 326px,#9eff00 354px,#deff00)"></i>
<i style="left:2px;top:172px;width:389px;height:2px;background:linear-gradient(90deg,#00ff52,#00ff3a 118px,#00ff13 254px,#4aff00 304px,#69ff00 323px,#b0ff00 362px,#e8ff00)"></i>
<i style="left:2px;top:174px;width:392px;height:2px;background:linear-gradient(90deg,#00ff54,#00ff3b 120px,#00ff15 253px,#52ff00 308px,#66ff00 320px,#afff00 360px,#f2ff00)"></i>
<i style="left:2px;top:176px;width:395px;height:2px;background:linear-gradient(90deg,#00ff55,#00ff3d 118px,#00ff16 253px,#59ff00 311px,#7fff00 333px,#c4ff00 369px,#fcff00)"></i>
<i style="left:3px;top:178px;width:397px;height:2px;background:linear-gradient(90deg,#00ff56,#00ff3e 119px,#00ff18 251px,#62ff00 314px,#a9ff00 353px,#feff00 393px,#fff700)"></i>
<i style="left:3px;top:180px;width:400px;height:2px;background:linear-gradient(90deg,#00ff58,#00ff40 117px,#00ff1a 250px,#2fff0e 282px,#70ff00 321px,#bcff00 361px,#ffff00 392px,#ffed00)"></i>
<i style="left:3px;top:182px;width:403px;height:2px;background:linear-gradient(90deg,#00ff59,#00ff3e 132px,#00ff1c 249px,#2fff10 281px,#74ff00 322px,#bbff00 359px,#ffff00 390px,#ffe400)"></i>
<i style="left:3px;top:184px;width:405px;height:2px;background:linear-gradient(90deg,#00ff5b,#00ff42 122px,#00ff1e 248px,#37ff10 285px,#7aff01 324px,#baff00 357px,#feff00 388px,#ffdd00)"></i>
<i style="left:3px;top:186px;width:408px;height:2px;background:linear-gradient(90deg,#00ff5c,#00ff45 116px,#00ff1f 248px,#3cff11 287px,#75ff04 320px,#84ff00 328px,#b9ff00 355px,#fdff00 386px,#ffd400)"></i>
<i style="left:4px;top:188px;width:410px;height:2px;background:linear-gradient(90deg,#00ff5e,#00ff44 126px,#00ff21 246px,#34ff15 280px,#70ff07 315px,#8eff00 331px,#ffff00 384px,#ffcc00)"></i>
<i style="left:4px;top:190px;width:413px;height:2px;background:linear-gradient(90deg,#00ff5f,#00ff42 141px,#00ff23 245px,#34ff17 279px,#76ff08 317px,#97ff00 334px,#ffff00 382px,#ffdf00 397px,#ffc400)"></i>
<i style="left:4px;top:192px;width:416px;height:2px;background:linear-gradient(90deg,#00ff61,#00ff49 119px,#00ff25 244px,#34ff19 278px,#71ff0b 313px,#a2ff00 338px,#feff00 380px,#ffd600 400px,#ffbc00)"></i>
<i style="left:4px;top:194px;width:419px;height:2px;background:linear-gradient(90deg,#00ff62,#00ff49 126px,#00ff27 243px,#34ff1b 277px,#79ff0c 316px,#adff00 342px,#fffe00 379px,#ffd800 397px,#ffb500)"></i>
<i style="left:5px;top:196px;width:421px;height:2px;background:linear-gradient(90deg,#00ff64,#00ff4a 128px,#00ff29 242px,#45ff1a 285px,#72ff10 310px,#b6ff00 344px,#ffff00 376px,#ffd100 398px,#ffae00)"></i>
<i style="left:5px;top:198px;width:423px;height:2px;background:linear-gradient(90deg,#00ff65,#00ff4c 127px,#00ff2b 241px,#40ff1d 281px,#7cff10 314px,#c2ff00 348px,#feff00 374px,#ffd300 395px,#ffa800)"></i>
<i style="left:5px;top:200px;width:426px;height:2px;background:linear-gradient(90deg,#00ff67,#00ff4e 126px,#00ff2d 240px,#3bff20 277px,#73ff14 308px,#ccff00 351px,#feff00 372px,#ffc700 400px,#ffa200)"></i>
<i style="left:6px;top:202px;width:428px;height:2px;background:linear-gradient(90deg,#00ff69,#00ff50 124px,#00ff30 238px,#3bff23 275px,#6aff18 301px,#d9ff00 354px,#ffff00 370px,#ffc900 396px,#ff9c00)"></i>
<i style="left:6px;top:204px;width:431px;height:2px;background:linear-gradient(90deg,#00ff6a,#00ff53 119px,#00ff32 237px,#2aff29 264px,#74ff19 305px,#b6ff0a 337px,#e6ff00 358px,#ffff00 368px,#ffc400 397px,#ff9600)"></i>
<i style="left:6px;top:206px;width:434px;height:2px;background:linear-gradient(90deg,#00ff6c,#00ff53 127px,#00ff34 237px,#69ff1d 298px,#aaff10 330px,#feff00 366px,#ffc400 395px,#ff9000)"></i>
<i style="left:6px;top:208px;width:437px;height:2px;background:linear-gradient(90deg,#00ff6e,#00ff56 122px,#00ff36 236px,#5eff22 291px,#abff12 329px,#fffe00 365px,#ffbc00 398px,#ff8a00)"></i>
<i style="left:7px;top:210px;width:439px;height:2px;background:linear-gradient(90deg,#00ff6f,#00ff57 125px,#00ff38 234px,#66ff23 293px,#b5ff13 331px,#ffff03 362px,#ffe700 372px,#ffbc00 395px,#ff9d00 417px,#ff8500)"></i>
<i style="left:7px;top:212px;width:442px;height:2px;background:linear-gradient(90deg,#00ff71,#00ff5b 116px,#00ff3b 233px,#59ff28 285px,#b6ff15 330px,#feff06 360px,#ffe600 371px,#ffbc00 393px,#ff9800 419px,#ff8000)"></i>
<i style="left:7px;top:214px;width:444px;height:2px;background:linear-gradient(90deg,#00ff73,#00ff59 133px,#00ff3d 232px,#38ff31 266px,#81ff23 304px,#c5ff15 335px,#feff09 358px,#ffd900 375px,#ffb900 393px,#ff9900 416px,#ff7c00)"></i>
<i style="left:8px;top:216px;width:446px;height:2px;background:linear-gradient(90deg,#00ff75,#00ff5e 119px,#00ff3f 231px,#43ff32 270px,#88ff24 305px,#fffe0c 356px,#ffd000 377px,#ffb900 390px,#ff9400 417px,#ff7700)"></i>
<i style="left:8px;top:218px;width:449px;height:2px;background:linear-gradient(90deg,#00ff77,#00ff60 119px,#00ff42 230px,#3aff36 264px,#7aff29 297px,#b5ff1e 324px,#ffff0f 354px,#ffcc02 377px,#ffa700 400px,#ff8d00 421px,#ff7300)"></i>
<i style="left:8px;top:220px;width:452px;height:2px;background:linear-gradient(90deg,#00ff78,#00ff60 128px,#00ff44 229px,#3cff38 264px,#81ff2b 299px,#c9ff1d 331px,#feff12 352px,#ffce05 374px,#ffa700 398px,#ff8f00 417px,#ff6e00)"></i>
<i style="left:9px;top:222px;width:454px;height:2px;background:linear-gradient(90deg,#00ff7a,#00ff65 114px,#00ff47 227px,#31ff3d 256px,#75ff30 291px,#bcff22 323px,#fffe15 350px,#ffc505 376px,#ffa400 397px,#ff8600 422px,#ff6a00)"></i>
<i style="left:9px;top:224px;width:457px;height:2px;background:linear-gradient(90deg,#00ff7c,#00ff66 119px,#00ff49 226px,#31ff40 255px,#7cff31 293px,#c2ff24 324px,#ffff18 348px,#ffdd0f 362px,#ffab00 390px,#ff8a00 416px,#ff6600)"></i>
<i style="left:9px;top:226px;width:460px;height:2px;background:linear-gradient(90deg,#00ff7e,#00ff67 124px,#00ff4b 226px,#31ff42 254px,#72ff36 287px,#b5ff29 317px,#ffff1c 346px,#ffc90c 370px,#ffa100 395px,#ff7400 436px,#ff6100)"></i>
<i style="left:10px;top:228px;width:461px;height:2px;background:linear-gradient(90deg,#00ff80,#00ff68 128px,#00ff4e 224px,#31ff45 252px,#79ff38 288px,#bbff2b 317px,#feff1f 343px,#ffcb0f 366px,#ffa503 389px,#ff7b00 425px,#ff5e00)"></i>
<i style="left:10px;top:230px;width:464px;height:2px;background:linear-gradient(90deg,#00ff82,#00ff6e 111px,#00ff51 223px,#31ff48 251px,#71ff3c 283px,#b5ff30 313px,#fffe22 342px,#ffe018 354px,#ffc00e 370px,#ff9e04 392px,#ff9400 400px,#ff7600 428px,#ff5a00)"></i>
<i style="left:10px;top:232px;width:467px;height:2px;background:linear-gradient(90deg,#00ff84,#00ff70 112px,#00ff53 222px,#33ff4a 251px,#78ff3e 285px,#bbff32 314px,#ffff25 340px,#ffdc1a 354px,#ffc212 367px,#ff9603 396px,#ff7200 430px,#ff5700)"></i>
<i style="left:11px;top:234px;width:469px;height:2px;background:linear-gradient(90deg,#00ff86,#00ff71 117px,#00ff56 220px,#33ff4d 249px,#70ff42 279px,#b0ff37 307px,#feff29 337px,#ffc415 363px,#ff9706 392px,#ff8700 406px,#ff6f00 430px,#ff5300)"></i>
<i style="left:11px;top:236px;width:472px;height:2px;background:linear-gradient(90deg,#00ff88,#00ff72 123px,#00ff59 220px,#33ff50 248px,#80ff42 285px,#d2ff34 319px,#feff2d 335px,#ffc418 361px,#ff9307 393px,#ff8000 410px,#ff6c00 431px,#ff5000)"></i>
<i style="left:11px;top:238px;width:475px;height:2px;background:linear-gradient(90deg,#00ff8a,#00ff75 120px,#00ff5c 219px,#35ff52 248px,#7aff47 281px,#c4ff3a 312px,#fdff30 333px,#ffc81c 357px,#ff940a 390px,#ff7b00 413px,#ff6200 441px,#ff4c00)"></i>
<i style="left:12px;top:240px;width:477px;height:2px;background:linear-gradient(90deg,#00ff8c,#00ff78 116px,#00ff5e 217px,#39ff55 248px,#74ff4b 276px,#c8ff3d 311px,#ffff34 331px,#ffd926 346px,#ffbd1b 360px,#ff900b 390px,#ff7500 416px,#ff5b00 447px,#ff4900)"></i>
<i style="left:12px;top:242px;width:479px;height:2px;background:linear-gradient(90deg,#00ff8e,#00ff7a 118px,#00ff61 216px,#1cff5c 232px,#65ff50 268px,#baff42 304px,#feff37 329px,#ffde2b 342px,#ffbd1e 358px,#ff910d 387px,#ff7000 419px,#ff5c00 443px,#ff4600)"></i>
<i style="left:13px;top:244px;width:481px;height:2px;background:linear-gradient(90deg,#00ff90,#00ff7b 124px,#00ff64 214px,#18ff60 228px,#7cff50 276px,#beff45 303px,#fdff3b 326px,#ffdc2d 340px,#ffbd21 355px,#ff8d0e 387px,#ff6a00 422px,#ff4300)"></i>
<i style="left:13px;top:246px;width:484px;height:2px;background:linear-gradient(90deg,#00ff93,#00ff7f 117px,#00ff67 214px,#4cff5b 253px,#7fff53 276px,#c2ff48 303px,#ffff3e 325px,#ffe133 336px,#ffbf25 352px,#ff8e11 384px,#ff6500 426px,#ff4000)"></i>
<i style="left:13px;top:248px;width:487px;height:2px;background:linear-gradient(90deg,#00ff95,#00ff7e 134px,#00ff6a 213px,#6bff59 266px,#b1ff4f 295px,#ffff43 323px,#ffd832 338px,#ffbf28 350px,#ff8a12 385px,#ff6000 429px,#ff3d00)"></i>
<i style="left:14px;top:250px;width:489px;height:2px;background:linear-gradient(90deg,#00ff97,#00ff88 96px,#00ff6d 211px,#67ff5d 262px,#b5ff52 294px,#feff47 320px,#ffc12c 346px,#ffaa22 359px,#ff8512 386px,#ff5b00 432px,#ff3a00)"></i>
<i style="left:14px;top:252px;width:492px;height:2px;background:linear-gradient(90deg,#00ff99,#00ff8a 99px,#00ff70 210px,#42ff66 244px,#7fff5d 271px,#c9ff52 300px,#fdff4b 318px,#ffd237 336px,#ffb62a 350px,#ff8716 382px,#ff6d0a 407px,#ff5700 435px,#ff3800)"></i>
<i style="left:15px;top:254px;width:494px;height:2px;background:linear-gradient(90deg,#00ff9c,#00ff8b 107px,#00ff73 209px,#6fff63 262px,#b5ff59 290px,#ffff4e 316px,#ffde40 328px,#ffb62d 347px,#ff8216 383px,#ff6308 415px,#ff5300 438px,#ff3500)"></i>
<i style="left:15px;top:256px;width:497px;height:2px;background:linear-gradient(90deg,#00ff9e,#00ff8c 116px,#00ff77 208px,#3cff6e 238px,#72ff66 262px,#b9ff5c 290px,#feff53 314px,#ffdc42 327px,#ffb430 346px,#ff9622 365px,#ff7c16 386px,#ff650b 410px,#ff4f00 441px,#ff3200)"></i>
<i style="left:15px;top:258px;width:499px;height:2px;background:linear-gradient(90deg,#00ffa1,#00ff8e 120px,#00ff7a 207px,#3aff72 236px,#75ff6a 262px,#b5ff61 287px,#fdff57 312px,#ffda45 326px,#ffb433 344px,#ff9725 362px,#ff7f1a 381px,#ff5e0a 416px,#ff4b00 445px,#ff3000)"></i>
<i style="left:16px;top:260px;width:501px;height:2px;background:linear-gradient(90deg,#00ffa3,#00ff91 118px,#00ff7d 205px,#3aff75 234px,#82ff6c 265px,#b9ff64 286px,#fdff5b 309px,#ffd346 326px,#ffb436 341px,#ff9427 361px,#ff7819 384px,#ff5c0b 415px,#ff4700 447px,#ff2d00)"></i>
<i style="left:16px;top:262px;width:504px;height:2px;background:linear-gradient(90deg,#00ffa5,#00ff98 95px,#00ff81 204px,#2bff7b 226px,#74ff71 258px,#c0ff67 287px,#ffff5f 308px,#ffd148 325px,#ffb43a 339px,#ff982b 356px,#ff7c1d 378px,#ff5d0e 411px,#ff4300 451px,#ff2b00)"></i>
<i style="left:17px;top:264px;width:506px;height:2px;background:linear-gradient(90deg,#00ffa8,#00ff99 105px,#00ff84 203px,#66ff77 250px,#aeff6e 278px,#feff64 305px,#ffdb51 318px,#ffb43d 336px,#ff8e29 360px,#ff751c 381px,#ff550c 418px,#ff3f00 454px,#ff2900)"></i>
<i style="left:17px;top:266px;width:509px;height:2px;background:linear-gradient(90deg,#00ffaa,#00ff99 122px,#00ff88 202px,#36ff81 228px,#82ff78 260px,#c6ff6f 285px,#fdff68 303px,#ffd451 319px,#ffb440 334px,#ff9932 350px,#ff7a22 374px,#ff530d 418px,#ff3c00 457px,#ff2600)"></i>
<i style="left:18px;top:268px;width:511px;height:2px;background:linear-gradient(90deg,#00ffad,#00ff9b 127px,#00ff8b 200px,#36ff85 226px,#76ff7d 253px,#bcff75 279px,#ffff6d 301px,#ffe15d 311px,#ffb444 331px,#ff8c2e 356px,#ff701f 380px,#ff4f0d 420px,#ff3900 460px,#ff2400)"></i>
<i style="left:18px;top:270px;width:514px;height:2px;background:linear-gradient(90deg,#00ffb0,#00ffa3 98px,#00ff8f 199px,#36ff89 225px,#7cff81 254px,#b2ff7a 274px,#feff71 299px,#ffdf60 310px,#ffb448 329px,#ff8d32 353px,#ff7725 371px,#ff5211 413px,#ff3600 463px,#ff2200)"></i>
<i style="left:19px;top:272px;width:515px;height:2px;background:linear-gradient(90deg,#00ffb2,#00ffa5 104px,#00ff93 197px,#2bff8e 218px,#75ff86 249px,#c2ff7d 277px,#feff76 296px,#ffda61 309px,#ffb44b 326px,#ff9a3c 341px,#ff7b2a 364px,#ff611b 390px,#ff480d 424px,#ff3200 466px,#ff2000)"></i>
<i style="left:19px;top:274px;width:518px;height:2px;background:linear-gradient(90deg,#00ffb5,#00ff97 197px,#34ff91 221px,#73ff8a 247px,#b2ff83 270px,#fdff7b 294px,#ffce5e 312px,#ffb24e 325px,#ff8b37 349px,#ff752a 367px,#ff5919 397px,#ff420c 431px,#ff3000 469px,#ff1e00)"></i>
<i style="left:20px;top:276px;width:520px;height:2px;background:linear-gradient(90deg,#00ffb8,#00ffac 99px,#00ff9a 195px,#34ff95 219px,#79ff8e 247px,#a5ff89 263px,#ffff80 292px,#ffcc61 310px,#ffa047 332px,#ff7f33 355px,#ff6020 385px,#ff420e 427px,#ff2c00 472px,#ff1c00)"></i>
<i style="left:20px;top:278px;width:523px;height:2px;background:linear-gradient(90deg,#00ffbb,#00ffae 108px,#00ff9e 194px,#34ff99 218px,#6aff94 240px,#afff8d 265px,#feff85 290px,#ffd169 306px,#ffa54d 327px,#ff8539 348px,#ff6324 379px,#ff4512 419px,#ff2d02 468px,#ff1a00)"></i>
<i style="left:20px;top:280px;width:526px;height:2px;background:linear-gradient(90deg,#00ffbe,#00ffa3 193px,#2dff9e 214px,#68ff98 238px,#9cff93 257px,#fdff8a 288px,#ffca68 307px,#ffa350 326px,#ff7d37 352px,#ff5e24 382px,#ff4212 421px,#ff2a02 471px,#ff1800)"></i>
<i style="left:21px;top:282px;width:528px;height:2px;background:linear-gradient(90deg,#00ffc1,#00ffa7 191px,#2dffa2 212px,#76ff9c 241px,#bbff95 265px,#fcff8f 285px,#ffcf70 302px,#ffa353 323px,#ff7f3c 347px,#ff6128 375px,#ff3f12 422px,#ff2702 473px,#ff1600)"></i>
<i style="left:21px;top:284px;width:531px;height:2px;background:linear-gradient(90deg,#00ffc4,#00ffab 191px,#39ffa6 216px,#74ffa1 239px,#c6ff99 267px,#ffff95 284px,#ffd277 299px,#ffaa5c 317px,#ff8845 338px,#ff6830 365px,#ff471a 406px,#ff2f09 451px,#ff2200 485px,#ff1400)"></i>
<i style="left:22px;top:286px;width:532px;height:2px;background:linear-gradient(90deg,#00ffc7,#00ffaf 189px,#2dffab 209px,#72ffa6 236px,#b8ffa0 260px,#feff9a 281px,#ffc170 303px,#ff9f58 320px,#ff8245 339px,#ff5f2c 371px,#ff4219 410px,#ff2907 460px,#ff1f00 488px,#ff1200)"></i>
<i style="left:22px;top:288px;width:535px;height:2px;background:linear-gradient(90deg,#00ffca,#00ffb3 188px,#2dffb0 208px,#70ffab 234px,#c0ffa4 261px,#fdffa0 279px,#ffd07f 295px,#ffa661 314px,#ff8349 336px,#ff6332 364px,#ff421b 407px,#ff2a09 456px,#ff1d00 491px,#ff1000)"></i>
<i style="left:23px;top:290px;width:537px;height:2px;background:linear-gradient(90deg,#00ffcd,#00ffb8 186px,#2dffb5 206px,#7cffaf 236px,#b5ffab 255px,#ffffa5 277px,#ffd386 291px,#ffa464 312px,#ff7c47 338px,#ff5c30 368px,#ff3c19 413px,#ff2709 458px,#ff1a00 494px,#ff0f00)"></i>
<i style="left:23px;top:292px;width:540px;height:2px;background:linear-gradient(90deg,#00ffd0,#00ffbc 185px,#2dffb9 205px,#7affb4 234px,#fffca9 276px,#ffce87 291px,#ffa267 311px,#ff7948 338px,#ff5f35 362px,#ff3d1c 408px,#ff2409 461px,#ff1800 497px,#ff0d00)"></i>
<i style="left:24px;top:294px;width:542px;height:2px;background:linear-gradient(90deg,#00ffd3,#00ffc1 184px,#37ffbe 207px,#78ffb9 231px,#b5ffb6 251px,#fffdaf 273px,#ffc988 290px,#ffa069 309px,#ff7b4d 333px,#ff5934 365px,#ff3d1e 404px,#ff260c 453px,#ff1600 500px,#ff0b00)"></i>
<i style="left:24px;top:296px;width:545px;height:2px;background:linear-gradient(90deg,#00ffd7,#00ffc6 183px,#32ffc3 204px,#73ffbf 228px,#b0ffbc 248px,#fffeb6 271px,#ffcc90 287px,#ff9e6c 308px,#ff784f 333px,#ff5c39 359px,#ff4023 396px,#ff260e 449px,#ff1400 504px,#ff0a00)"></i>
<i style="left:25px;top:298px;width:547px;height:2px;background:linear-gradient(90deg,#00ffda,#00ffcb 181px,#32ffc8 202px,#6effc5 224px,#b5ffc1 247px,#ffffbd 268px,#ffc791 286px,#ff9c6f 306px,#ff7550 332px,#ff5637 362px,#ff3b22 400px,#ff1f0b 461px,#ff1200 506px,#ff0800)"></i>
<i style="left:25px;top:300px;width:550px;height:2px;background:linear-gradient(90deg,#00ffde,#00ffd0 180px,#2dffcd 199px,#66ffcb 220px,#b0ffc7 244px,#fffcc1 267px,#ffc292 286px,#ff9870 306px,#ff7755 328px,#ff583c 357px,#ff3721 404px,#ff200d 457px,#ff0f00 510px,#ff0600)"></i>
<i style="left:26px;top:302px;width:551px;height:2px;background:linear-gradient(90deg,#00ffe1,#00ffd5 178px,#1bffd3 190px,#5effd1 215px,#abffcd 240px,#fffdc8 264px,#ffca9e 280px,#ff9673 304px,#ff7456 327px,#ff543c 358px,#ff3824 398px,#ff2110 449px,#ff0e00 512px,#ff0500)"></i>
<i style="left:27px;top:304px;width:553px;height:2px;background:linear-gradient(90deg,#00ffe5,#00ffda 177px,#3dffd8 201px,#8cffd5 228px,#fffed0 261px,#ffcda6 276px,#ff9d7d 297px,#ff765c 322px,#ff5540 353px,#ff3524 399px,#ff1d0f 454px,#ff0b00 515px,#ff0300)"></i>
<i style="left:27px;top:306px;width:556px;height:2px;background:linear-gradient(90deg,#00ffe8,#00ffdf 176px,#35ffdd 197px,#71ffdc 218px,#aeffda 237px,#ffffd7 259px,#ffc8a7 276px,#ff997e 297px,#ff6e59 326px,#ff503e 356px,#ff3628 394px,#ff1f13 444px,#ff0a00 518px,#ff0200)"></i>
<i style="left:28px;top:308px;width:558px;height:2px;background:linear-gradient(90deg,#00ffec,#00ffe5 174px,#35ffe3 195px,#78ffe1 218px,#fffddc 257px,#ffc8ad 273px,#ff957f 296px,#ff6b5a 325px,#ff5143 351px,#ff3328 395px,#ff1b11 452px,#ff0800 521px,#ff0000)"></i>
<i style="left:28px;top:310px;width:561px;height:2px;background:linear-gradient(90deg,#00fff0,#00ffea 173px,#35ffe9 194px,#79ffe8 217px,#bcffe6 237px,#fffee4 255px,#ffcbb6 270px,#ffb4a0 279px,#ff9382 295px,#ff6e60 320px,#ff4d42 353px,#ff342b 390px,#ff1710 458px,#ff0600 525px,#ff0000)"></i>
<i style="left:29px;top:312px;width:563px;height:2px;background:linear-gradient(90deg,#00fff4,#01fff0 172px,#38ffef 193px,#7affee 215px,#beffed 235px,#ffffec 252px,#ffe1d0 260px,#ffc3b4 270px,#ff9a8e 288px,#ff7267 314px,#ff4e46 348px,#ff302a 393px,#ff1813 450px,#ff0400 527px,#ff0000)"></i>
<i style="left:29px;top:314px;width:566px;height:2px;background:linear-gradient(90deg,#00fff8,#00fff6 171px,#38fff5 192px,#6efff5 210px,#b5fff4 231px,#fefff4 250px,#fffcf0 251px,#ffdbd1 260px,#ffbeb5 270px,#ff8d86 293px,#ff6660 321px,#ff4a46 350px,#ff2e2a 394px,#ff1411 459px,#ff0200 531px,#ff0000)"></i>
<i style="left:30px;top:316px;width:568px;height:2px;background:linear-gradient(90deg,#00fffc,#00fffb 169px,#3bfffb 191px,#72fffb 209px,#acfffb 226px,#fffdf9 248px,#ffc7c3 264px,#ffafad 273px,#ff9290 287px,#ff6a68 314px,#ff4746 350px,#ff2828 401px,#ff1514 451px,#ff0100 533px,#ff0000)"></i>
<i style="left:30px;top:318px;width:570px;height:2px;background:linear-gradient(90deg,#00feff,#00fcff 168px,#32fcff 187px,#78fcff 210px,#affcff 226px,#fffafe 247px,#ffd6d9 257px,#ffbec2 265px,#ffa8ab 274px,#ff8d8f 288px,#ff686b 313px,#ff4749 347px,#ff2829 399px,#ff1315 452px,#ff0002 530px,#ff0000)"></i>
<i style="left:31px;top:320px;width:572px;height:2px;background:linear-gradient(90deg,#00faff,#01f7ff 167px,#3ff6ff 190px,#79f5ff 209px,#baf4ff 228px,#fff3fe 246px,#ffd3dd 255px,#ffb9c3 264px,#ffa4ac 273px,#ff8990 287px,#ff656c 312px,#ff454a 346px,#ff292d 392px,#ff1216 450px,#ff0003 524px,#ff0000)"></i>
<i style="left:32px;top:322px;width:574px;height:2px;background:linear-gradient(90deg,#00f6ff,#01f1ff 165px,#38f0ff 186px,#7aefff 208px,#beedff 228px,#ffecff 245px,#ffd0e1 253px,#ffb7c6 262px,#ffa1b0 271px,#ff8591 286px,#ff626d 311px,#ff434b 345px,#ff2228 403px,#ff0e14 458px,#ff0005 518px,#ff0000)"></i>
<i style="left:32px;top:324px;width:577px;height:2px;background:linear-gradient(90deg,#00f2ff,#00ebff 164px,#34eaff 184px,#7ee8ff 209px,#b7e7ff 226px,#ffe5ff 245px,#ffafc4 263px,#ff8394 285px,#ff5c6a 314px,#ff3e49 349px,#ff1f28 405px,#ff0911 472px,#ff0007 512px,#ff0000 545px,#ff0000)"></i>
<i style="left:33px;top:326px;width:579px;height:2px;background:linear-gradient(90deg,#00eeff,#00e5ff 162px,#3be4ff 185px,#82e2ff 209px,#ffdbfc 245px,#ffaac5 262px,#ff90a9 274px,#ff798e 288px,#ff586a 314px,#ff3b4a 348px,#ff1d28 406px,#ff0b15 459px,#ff0009 506px,#ff0000 548px,#ff0000)"></i>
<i style="left:33px;top:328px;width:582px;height:2px;background:linear-gradient(90deg,#00eaff,#01e0ff 162px,#42deff 187px,#86dbff 210px,#ffd5fc 245px,#ffa5c6 262px,#ff758f 288px,#ff556b 314px,#ff3445 356px,#ff1b28 408px,#ff0510 478px,#ff000b 501px,#ff0000 552px,#ff0000)"></i>
<i style="left:34px;top:330px;width:584px;height:2px;background:linear-gradient(90deg,#00e6ff,#01dbff 160px,#3ed8ff 184px,#8ad5ff 210px,#ffcffd 244px,#ffb1db 254px,#ff9abf 264px,#ff7fa1 278px,#ff6b88 292px,#ff4861 324px,#ff3246 355px,#ff1625 416px,#ff010e 490px,#ff0000 554px,#ff0000)"></i>
<i style="left:34px;top:332px;width:586px;height:2px;background:linear-gradient(90deg,#00e2ff,#00d5ff 159px,#5bd1ff 194px,#a1ceff 217px,#ffc8fe 244px,#ffb7e8 250px,#ff91bb 266px,#ff6b8e 289px,#ff506d 313px,#ff3047 355px,#ff1425 418px,#ff0110 485px,#ff0000 558px,#ff0000)"></i>
<i style="left:35px;top:334px;width:588px;height:2px;background:linear-gradient(90deg,#00deff,#00d0ff 157px,#5fcbff 194px,#a8c8ff 218px,#ffc2fe 243px,#ffaadf 252px,#ff8dbc 265px,#ff688f 288px,#ff4c6d 313px,#ff2e48 354px,#ff162b 405px,#ff0010 484px,#ff0000 560px,#ff0000)"></i>
<i style="left:36px;top:336px;width:590px;height:2px;background:linear-gradient(90deg,#00daff,#00cbff 155px,#42c8ff 182px,#7dc4ff 203px,#bcc1ff 223px,#ffbdff 242px,#ffa9e6 249px,#ff88bd 264px,#ff6590 287px,#ff4a6e 312px,#ff2c49 353px,#ff142b 406px,#ff0012 478px,#ff0000 563px,#ff0000)"></i>
<i style="left:36px;top:338px;width:593px;height:2px;background:linear-gradient(90deg,#00d6ff,#01c6ff 155px,#39c3ff 178px,#78bfff 201px,#b9bbff 222px,#ffb7ff 242px,#ffa4e7 249px,#ff86c0 263px,#ff6191 287px,#ff476f 312px,#ff2c4c 350px,#ff112a 410px,#ff0015 472px,#ff0001 560px,#ff0000)"></i>
<i style="left:37px;top:340px;width:595px;height:2px;background:linear-gradient(90deg,#00d3ff,#01c2ff 153px,#42bdff 180px,#76baff 199px,#ffaefc 242px,#ff82c1 262px,#ff5e92 286px,#ff4470 311px,#ff284a 353px,#ff122e 402px,#ff0017 466px,#ff0002 557px,#ff0000)"></i>
<i style="left:38px;top:342px;width:597px;height:2px;background:linear-gradient(90deg,#00cfff,#00bdff 151px,#46b8ff 180px,#74b5ff 197px,#b3b0ff 218px,#ffa9fc 241px,#ff91dc 251px,#ff7abd 263px,#ff578e 288px,#ff4271 310px,#ff264b 352px,#ff0f2d 405px,#ff0019 460px,#ff0004 548px,#ff0000)"></i>
<i style="left:38px;top:344px;width:600px;height:2px;background:linear-gradient(90deg,#00cbff,#00b9ff 150px,#33b5ff 172px,#75b0ff 197px,#aaabff 215px,#ffa3fd 241px,#ff7bc5 260px,#ff64a5 275px,#ff548f 288px,#ff4073 309px,#ff2047 359px,#ff0d2c 409px,#ff001b 455px,#ff0005 546px,#ff0000)"></i>
<i style="left:39px;top:346px;width:601px;height:2px;background:linear-gradient(90deg,#00c8ff,#00b4ff 148px,#32b0ff 170px,#73abff 195px,#baa5ff 219px,#ff9efd 240px,#ff74c1 261px,#ff5190 287px,#ff3d74 308px,#ff204a 355px,#ff0d30 401px,#ff001e 449px,#ff0006 543px,#ff0000)"></i>
<i style="left:39px;top:348px;width:604px;height:2px;background:linear-gradient(90deg,#00c4ff,#01b0ff 148px,#31abff 169px,#7fa5ff 199px,#b7a0ff 218px,#ff99fe 240px,#ff75c9 258px,#ff5094 285px,#ff3369 319px,#ff1f4d 352px,#ff0b2f 405px,#ff0020 444px,#ff000b 521px,#ff0000 581px,#ff0000)"></i>
<i style="left:40px;top:350px;width:606px;height:2px;background:linear-gradient(90deg,#00c1ff,#01abff 146px,#3ca6ff 172px,#72a1ff 193px,#ca99ff 223px,#ff94fe 239px,#ff6ec5 259px,#ff4d95 284px,#ff326c 316px,#ff1e4e 351px,#ff0f38 387px,#ff0023 437px,#ff000b 523px,#ff0000)"></i>
<i style="left:41px;top:352px;width:608px;height:2px;background:linear-gradient(90deg,#00bdff,#00a7ff 144px,#36a2ff 168px,#7b9bff 195px,#c794ff 221px,#ff8fff 238px,#ff6ecd 255px,#ff4c99 281px,#ff306e 314px,#ff1a4c 354px,#ff0932 400px,#ff0026 431px,#ff000b 525px,#ff0000)"></i>
<i style="left:41px;top:354px;width:611px;height:2px;background:linear-gradient(90deg,#00baff,#00a3ff 143px,#359eff 167px,#8496ff 198px,#c48fff 220px,#ff8aff 238px,#ff67c9 257px,#ff499a 281px,#ff2f70 313px,#ff194f 351px,#ff0028 426px,#ff000e 514px,#ff0001 583px,#ff0000)"></i>
<i style="left:42px;top:356px;width:612px;height:2px;background:linear-gradient(90deg,#00b6ff,#019fff 142px,#3b99ff 168px,#7293ff 190px,#b58cff 214px,#ff83fc 238px,#ff61c5 258px,#ff4293 285px,#ff2d72 311px,#ff164d 354px,#ff002b 420px,#ff001b 465px,#ff0008 545px,#ff0000)"></i>
<i style="left:43px;top:358px;width:610px;height:2px;background:linear-gradient(90deg,#00b3ff,#019bff 140px,#4194ff 169px,#788eff 191px,#a18aff 206px,#ff7efd 237px,#ff5ec8 256px,#ff4197 282px,#ff2b74 309px,#ff1550 350px,#ff002e 414px,#ff001c 463px,#ff0009 542px,#ff0000)"></i>
<i style="left:43px;top:360px;width:604px;height:2px;background:linear-gradient(90deg,#00b0ff,#0197ff 139px,#3291ff 162px,#718aff 188px,#aa84ff 209px,#ff7afd 237px,#ff57c2 259px,#ff388f 288px,#ff1f64 326px,#ff114c 357px,#ff0031 409px,#ff001d 462px,#ff000c 530px,#ff0000)"></i>
<i style="left:44px;top:362px;width:597px;height:2px;background:linear-gradient(90deg,#00acff,#0093ff 137px,#418cff 167px,#7785ff 189px,#b37eff 211px,#ff75fe 236px,#ff54c5 257px,#ff3f9f 277px,#ff2878 306px,#ff1151 350px,#ff0034 403px,#ff001e 460px,#ff0001)"></i>
<i style="left:45px;top:364px;width:590px;height:2px;background:linear-gradient(90deg,#00a9ff,#008fff 135px,#3989ff 162px,#7d80ff 190px,#b979ff 212px,#ff70fe 235px,#ff52c8 255px,#ff3798 281px,#ff267a 304px,#ff1154 346px,#ff0037 396px,#ff0027 434px,#ff0013 502px,#ff0002)"></i>
<i style="left:45px;top:366px;width:584px;height:2px;background:linear-gradient(90deg,#00a6ff,#018cff 135px,#3885ff 161px,#767dff 187px,#bc74ff 213px,#ff6cff 235px,#ff50cb 254px,#ff369c 279px,#ff257c 303px,#ff1057 343px,#ff003a 391px,#ff0027 436px,#ff0012 509px,#ff0004)"></i>
<i style="left:46px;top:368px;width:577px;height:2px;background:linear-gradient(90deg,#00a2ff,#0188ff 133px,#4080ff 163px,#8677ff 192px,#c26fff 214px,#ff68ff 234px,#ff4ece 252px,#ff35a0 276px,#ff1c71 313px,#ff0d55 346px,#ff003e 385px,#ff0027 437px,#ff0014 502px,#ff0005)"></i>
<i style="left:47px;top:370px;width:570px;height:2px;background:linear-gradient(90deg,#009fff,#0084ff 131px,#367dff 157px,#7575ff 184px,#b46dff 208px,#ff63ff 233px,#ff4bd1 250px,#ff34a4 273px,#ff1c76 308px,#ff0b55 346px,#ff0041 379px,#ff0028 435px,#ff0013 508px,#ff0007)"></i>
<i style="left:47px;top:372px;width:564px;height:2px;background:linear-gradient(90deg,#009cff,#0081ff 130px,#6c72ff 180px,#b768ff 209px,#ff5efd 234px,#ff46cd 252px,#ff2fa0 276px,#ff1b79 306px,#ff0a58 343px,#ff0045 374px,#ff0028 437px,#ff0015 502px,#ff0009)"></i>
<i style="left:48px;top:374px;width:556px;height:2px;background:linear-gradient(90deg,#0099ff,#007eff 128px,#3277ff 153px,#796dff 184px,#ba64ff 209px,#ff59fd 233px,#ff43d0 250px,#ff2ea4 273px,#ff1a7c 303px,#ff0c5f 334px,#ff0048 368px,#ff002c 427px,#ff001b 480px,#ff000a)"></i>
<i style="left:49px;top:376px;width:549px;height:2px;background:linear-gradient(90deg,#0096ff,#017aff 127px,#2f73ff 150px,#706aff 179px,#aa62ff 202px,#ff55fe 232px,#ff3dca 252px,#ff29a0 275px,#ff187e 301px,#ff0a5f 334px,#ff004c 362px,#ff002f 420px,#ff0019 489px,#ff000c)"></i>
<i style="left:50px;top:378px;width:542px;height:2px;background:linear-gradient(90deg,#0092ff,#0177ff 125px,#3f6eff 156px,#7865ff 181px,#b55dff 205px,#ff51fe 231px,#ff3ccf 249px,#ff28a4 272px,#ff1780 299px,#ff075f 334px,#ff0051 355px,#ff002d 426px,#ff000e)"></i>
<i style="left:50px;top:380px;width:536px;height:2px;background:linear-gradient(90deg,#008fff,#0074ff 124px,#3e6aff 155px,#7462ff 179px,#c057ff 209px,#ff4dfe 231px,#ff39d2 248px,#ff26a8 270px,#ff1683 297px,#ff0763 330px,#ff0055 350px,#ff0035 408px,#ff001e 474px,#ff0010)"></i>
<i style="left:51px;top:382px;width:529px;height:2px;background:linear-gradient(90deg,#008cff,#0070ff 122px,#3d67ff 153px,#705fff 176px,#ab56ff 200px,#ff4aff 230px,#ff33cc 250px,#ff22a4 272px,#ff1485 295px,#ff0563 330px,#ff0059 344px,#ff0034 411px,#ff0011)"></i>
<i style="left:52px;top:384px;width:522px;height:2px;background:linear-gradient(90deg,#0089ff,#016dff 121px,#3c64ff 151px,#8658ff 184px,#c34fff 208px,#ff46ff 229px,#ff32d1 247px,#ff20a8 269px,#ff0f7f 300px,#ff0363 330px,#ff004b 365px,#ff0036 407px,#ff0021 466px,#ff0013)"></i>
<i style="left:53px;top:386px;width:515px;height:2px;background:linear-gradient(90deg,#0086ff,#016aff 119px,#3b61ff 149px,#6d59ff 172px,#a450ff 195px,#ff41fd 229px,#ff31d6 244px,#ff1da7 269px,#ff0e82 297px,#ff0163 330px,#ff004d 362px,#ff0035 410px,#ff0015)"></i>
<i style="left:53px;top:388px;width:508px;height:2px;background:linear-gradient(90deg,#0083ff,#0267ff 119px,#385eff 147px,#7055ff 173px,#b14aff 200px,#ff3dfd 229px,#ff2bd0 247px,#ff1cab 267px,#ff0c84 296px,#ff0063 331px,#ff003a 400px,#ff0017)"></i>
<i style="left:54px;top:390px;width:501px;height:2px;background:linear-gradient(90deg,#0080ff,#0064ff 116px,#7351ff 173px,#b946ff 202px,#ff39fe 228px,#ff2ad5 244px,#ff18a7 269px,#ff0b87 293px,#ff0067 326px,#ff003d 394px,#ff0019)"></i>
<i style="left:55px;top:392px;width:494px;height:2px;background:linear-gradient(90deg,#007dff,#0061ff 114px,#3b57ff 145px,#764dff 173px,#c141ff 204px,#ff36fe 227px,#ff23cd 247px,#ff18ae 264px,#ff0989 291px,#ff006c 320px,#ff004e 362px,#ff003b 399px,#ff001b)"></i>
<i style="left:56px;top:394px;width:487px;height:2px;background:linear-gradient(90deg,#007bff,#015eff 113px,#704bff 169px,#c13dff 203px,#ff32fe 226px,#ff23d4 243px,#ff13aa 266px,#ff088b 289px,#ff0077 308px,#ff006b 321px,#ff0053 354px,#ff003d 395px,#ff001e)"></i>
<i style="left:57px;top:396px;width:480px;height:2px;background:linear-gradient(90deg,#0078ff,#015bff 111px,#2755ff 132px,#7347ff 169px,#a13fff 189px,#ff2fff 225px,#ff22d9 240px,#ff13b1 261px,#ff078e 286px,#ff0071 314px,#ff0057 348px,#ff0041 387px,#ff0020)"></i>
<i style="left:57px;top:398px;width:474px;height:2px;background:linear-gradient(90deg,#0075ff,#0258ff 111px,#2a51ff 133px,#7843ff 171px,#ab3aff 193px,#ff2cff 225px,#ff1cd3 243px,#ff0fad 264px,#ff0083 297px,#ff0070 316px,#ff0052 357px,#ff003d 397px,#ff0022)"></i>
<i style="left:58px;top:400px;width:467px;height:2px;background:linear-gradient(90deg,#0072ff,#0056ff 108px,#2f4dff 134px,#7042ff 166px,#b535ff 196px,#ff28ff 224px,#ff1cda 239px,#ff0ba9 266px,#ff0089 291px,#ff006f 317px,#ff0049 373px,#ff0024)"></i>
<i style="left:59px;top:402px;width:459px;height:2px;background:linear-gradient(90deg,#006fff,#0053ff 106px,#324aff 134px,#753eff 167px,#ae33ff 192px,#ff24fd 224px,#ff15d0 243px,#ff0bb0 261px,#ff0090 285px,#ff0076 309px,#ff004d 366px,#ff003a 405px,#ff0027)"></i>
<i style="left:60px;top:404px;width:452px;height:2px;background:linear-gradient(90deg,#006cff,#0150ff 105px,#3547ff 134px,#7a3aff 168px,#b32fff 193px,#ff21fd 223px,#ff15d9 238px,#ff08af 261px,#ff0096 279px,#ff0074 311px,#ff004b 370px,#ff002a)"></i>
<i style="left:61px;top:406px;width:445px;height:2px;background:linear-gradient(90deg,#006aff,#014eff 103px,#3644ff 133px,#7238ff 163px,#b12cff 191px,#ff1dfe 222px,#ff15e0 234px,#ff08b6 256px,#ff009f 272px,#ff0073 312px,#ff0049 374px,#ff002c)"></i>
<i style="left:62px;top:408px;width:438px;height:2px;background:linear-gradient(90deg,#0067ff,#004bff 101px,#3741ff 132px,#7734ff 164px,#b628ff 192px,#ff1afe 221px,#ff10da 236px,#ff04b2 258px,#ff0095 279px,#ff007b 303px,#ff004e 365px,#ff002f)"></i>
<i style="left:63px;top:410px;width:431px;height:2px;background:linear-gradient(90deg,#0064ff,#0049ff 99px,#3a3dff 132px,#7e30ff 166px,#c223ff 196px,#ff17ff 220px,#ff0fe1 232px,#ff01b1 258px,#ff0092 281px,#ff0078 306px,#ff0051 360px,#ff0031)"></i>
<i style="left:64px;top:412px;width:424px;height:2px;background:linear-gradient(90deg,#0061ff,#0146ff 98px,#3b3bff 131px,#742fff 160px,#bb21ff 192px,#ff14ff 219px,#ff0ad9 235px,#ff01b8 253px,#ff0095 278px,#ff0077 307px,#ff0054 355px,#ff0034)"></i>
<i style="left:64px;top:414px;width:418px;height:2px;background:linear-gradient(90deg,#005fff,#0144ff 97px,#3c38ff 131px,#7d2bff 164px,#c71cff 197px,#ff11ff 219px,#ff09e2 231px,#ff00b7 254px,#ff0084 294px,#ff0059 348px,#ff0037)"></i>
<i style="left:65px;top:416px;width:411px;height:2px;background:linear-gradient(90deg,#005cff,#0241ff 96px,#4a32ff 137px,#8626ff 167px,#ff0dfd 219px,#ff00c5 245px,#ff00a6 265px,#ff008b 287px,#ff006f 317px,#ff0059 348px,#ff003a)"></i>
<i style="left:66px;top:418px;width:403px;height:2px;background:linear-gradient(90deg,#0059ff,#003fff 93px,#3334ff 123px,#7a26ff 160px,#b01bff 185px,#ff0afd 218px,#ff00d5 236px,#ff00c4 245px,#ff008f 283px,#ff0063 333px,#ff003e)"></i>
<i style="left:67px;top:420px;width:396px;height:2px;background:linear-gradient(90deg,#0057ff,#003dff 91px,#3d30ff 127px,#8721ff 165px,#ff08fe 217px,#ff00e0 230px,#ff00c1 246px,#ff0092 280px,#ff0065 330px,#ff0041)"></i>
<i style="left:68px;top:422px;width:389px;height:2px;background:linear-gradient(90deg,#0054ff,#013aff 90px,#492bff 132px,#921cff 169px,#ff05fe 216px,#ff00eb 224px,#ff00c0 246px,#ff008c 285px,#ff0065 330px,#ff0044)"></i>
<i style="left:69px;top:424px;width:382px;height:2px;background:linear-gradient(90deg,#0051ff,#0138ff 88px,#362cff 120px,#7c1eff 157px,#bc10ff 187px,#ff02fe 215px,#ff00c4 243px,#ff0090 281px,#ff0065 330px,#ff0047)"></i>
<i style="left:70px;top:426px;width:375px;height:2px;background:linear-gradient(90deg,#004fff,#0235ff 87px,#6121ff 142px,#a612ff 176px,#ff00ff 214px,#ff00c8 240px,#ff0094 277px,#ff006a 323px,#ff004b)"></i>
<i style="left:71px;top:428px;width:368px;height:2px;background:linear-gradient(90deg,#004cff,#0033ff 84px,#3129ff 114px,#751aff 151px,#ba0bff 184px,#ff00ff 213px,#ff00cc 237px,#ff0097 274px,#ff0070 315px,#ff004f)"></i>
<i style="left:72px;top:430px;width:361px;height:2px;background:linear-gradient(90deg,#004aff,#0031ff 82px,#3226ff 113px,#6c1aff 145px,#b809ff 182px,#df00ff 199px,#ff00ff 212px,#ff00c9 238px,#ff009a 271px,#ff0073 311px,#ff0053)"></i>
<i style="left:73px;top:432px;width:353px;height:2px;background:linear-gradient(90deg,#0047ff,#012fff 81px,#3f21ff 119px,#8013ff 154px,#d300ff 193px,#ff00fd 212px,#ff00c8 238px,#ff009d 268px,#ff0077 306px,#ff0057)"></i>
<i style="left:74px;top:434px;width:346px;height:2px;background:linear-gradient(90deg,#0045ff,#022cff 80px,#3920ff 114px,#7313ff 146px,#c800ff 187px,#fe00ff 210px,#ff00cc 235px,#ff00a0 265px,#ff007b 301px,#ff005b)"></i>
<i style="left:75px;top:436px;width:339px;height:2px;background:linear-gradient(90deg,#0042ff,#022aff 78px,#461bff 120px,#850dff 154px,#bd00ff 181px,#fe00ff 209px,#ff00c9 236px,#ff009d 267px,#ff007a 302px,#ff0060)"></i>
<i style="left:76px;top:438px;width:332px;height:2px;background:linear-gradient(90deg,#0040ff,#0029ff 75px,#401aff 115px,#780dff 146px,#b300ff 175px,#fd00ff 208px,#ff00cd 233px,#ff00a5 260px,#ff007f 296px,#ff0064)"></i>
<i style="left:77px;top:440px;width:325px;height:2px;background:linear-gradient(90deg,#003dff,#0126ff 74px,#710dff 141px,#a900ff 169px,#ff00ff 208px,#ff00d1 230px,#ff00a7 258px,#ff0086 288px,#ff0069)"></i>
<i style="left:78px;top:442px;width:318px;height:2px;background:linear-gradient(90deg,#003bff,#0124ff 72px,#4016ff 112px,#7b08ff 145px,#9d00ff 162px,#ff00ff 207px,#ff00d5 227px,#ff00ae 252px,#ff0082 292px,#ff006e)"></i>
<i style="left:79px;top:444px;width:311px;height:2px;background:linear-gradient(90deg,#0038ff,#0222ff 71px,#3217ff 102px,#7607ff 141px,#9300ff 156px,#ff00ff 206px,#ff00d2 228px,#ff00b0 250px,#ff009b 267px,#ff0073)"></i>
<i style="left:80px;top:446px;width:303px;height:2px;background:linear-gradient(90deg,#0036ff,#0320ff 70px,#3315ff 101px,#7e03ff 144px,#b100ff 170px,#fe00ff 205px,#ff00d6 225px,#ff00b2 248px,#ff0096 271px,#ff0079)"></i>
<i style="left:82px;top:448px;width:295px;height:2px;background:linear-gradient(90deg,#0033ff,#001fff 65px,#3c10ff 104px,#7902ff 139px,#c400ff 177px,#fe00ff 203px,#ff00dc 220px,#ff00bb 240px,#ff009b 265px,#ff007e)"></i>
<i style="left:83px;top:450px;width:288px;height:2px;background:linear-gradient(90deg,#0031ff,#011dff 64px,#380fff 100px,#7f00ff 141px,#c400ff 176px,#fe00ff 202px,#ff00e2 216px,#ff00bd 238px,#ff009f 261px,#ff0084)"></i>
<i style="left:84px;top:452px;width:281px;height:2px;background:linear-gradient(90deg,#002eff,#021aff 63px,#340eff 96px,#7a00ff 137px,#c000ff 173px,#fe00ff 201px,#ff00db 219px,#ff00bf 236px,#ff00a2 258px,#ff008a)"></i>
<i style="left:85px;top:454px;width:274px;height:2px;background:linear-gradient(90deg,#002cff,#0219ff 61px,#6600ff 124px,#8000ff 139px,#be00ff 171px,#ff00ff 201px,#ff00e1 215px,#ff00c1 234px,#ff0091)"></i>
<i style="left:86px;top:456px;width:267px;height:2px;background:linear-gradient(90deg,#002aff,#0017ff 58px,#5e00ff 118px,#7400ff 131px,#d500ff 181px,#ff00ff 200px,#ff00dc 217px,#ff00c3 232px,#ff0097)"></i>
<i style="left:87px;top:458px;width:260px;height:2px;background:linear-gradient(90deg,#0027ff,#0015ff 56px,#5600ff 112px,#7800ff 132px,#d500ff 180px,#ff00ff 199px,#ff00cd 225px,#ff009e)"></i>
<i style="left:88px;top:460px;width:253px;height:2px;background:linear-gradient(90deg,#0025ff,#0113ff 55px,#4e00ff 106px,#7500ff 129px,#d300ff 178px,#ff00ff 198px,#ff00d4 220px,#ff00a6)"></i>
<i style="left:89px;top:462px;width:245px;height:2px;background:linear-gradient(90deg,#0023ff,#0211ff 54px,#4500ff 99px,#7200ff 126px,#a700ff 155px,#fe00ff 197px,#ff00ce 223px,#ff00af)"></i>
<i style="left:91px;top:464px;width:237px;height:2px;background:linear-gradient(90deg,#0020ff,#030fff 52px,#3e00ff 92px,#8600ff 135px,#fe00ff 195px,#ff00d5 217px,#ff00b7)"></i>
<i style="left:92px;top:466px;width:230px;height:2px;background:linear-gradient(90deg,#001eff,#000eff 48px,#3700ff 86px,#6e00ff 120px,#b300ff 158px,#fe00ff 194px,#ff00c0)"></i>
<i style="left:93px;top:468px;width:223px;height:2px;background:linear-gradient(90deg,#001cff,#010cff 47px,#3100ff 80px,#7200ff 121px,#b900ff 160px,#fd00ff 193px,#ff00ca)"></i>
<i style="left:94px;top:470px;width:216px;height:2px;background:linear-gradient(90deg,#001aff,#010bff 45px,#2a00ff 74px,#8200ff 129px,#bd00ff 161px,#ff00ff 193px,#ff00d3)"></i>
<i style="left:96px;top:472px;width:208px;height:2px;background:linear-gradient(90deg,#0017ff,#0209ff 43px,#2200ff 66px,#7f00ff 125px,#c300ff 162px,#ff00ff 191px,#ff00de)"></i>
<i style="left:97px;top:474px;width:201px;height:2px;background:linear-gradient(90deg,#0015ff,#0307ff 42px,#1c00ff 60px,#7700ff 119px,#c500ff 162px,#ff00ff 190px,#ff00e9)"></i>
<i style="left:98px;top:476px;width:193px;height:2px;background:linear-gradient(90deg,#0013ff,#0006ff 38px,#1600ff 54px,#6200ff 105px,#a700ff 145px,#fe00ff 189px,#ff00f7)"></i>
<i style="left:100px;top:478px;width:185px;height:2px;background:linear-gradient(90deg,#0010ff,#0005ff 35px,#0d01ff 45px,#4800ff 86px,#7d00ff 119px,#b600ff 151px,#fa00ff)"></i>
<i style="left:101px;top:480px;width:178px;height:2px;background:linear-gradient(90deg,#000eff,#0202ff 35px,#6d00ff 108px,#a200ff 139px,#ed00ff)"></i>
<i style="left:103px;top:482px;width:170px;height:2px;background:linear-gradient(90deg,#000cff,#0300ff 33px,#3c00ff 74px,#7400ff 110px,#e100ff)"></i>
<i style="left:104px;top:484px;width:163px;height:2px;background:linear-gradient(90deg,#0009ff,#0000ff 28px,#0400ff 32px,#6600ff 100px,#d500ff)"></i>
<i style="left:106px;top:486px;width:155px;height:2px;background:linear-gradient(90deg,#0007ff,#0000ff 26px,#0500ff 30px,#6500ff 97px,#ca00ff)"></i>
<i style="left:108px;top:488px;width:147px;height:2px;background:linear-gradient(90deg,#0005ff,#0000ff 23px,#0600ff 28px,#6100ff 92px,#bf00ff)"></i>
<i style="left:109px;top:490px;width:139px;height:2px;background:linear-gradient(90deg,#0003ff,#0000ff 21px,#0700ff 27px,#6000ff 90px,#b200ff)"></i>
<i style="left:111px;top:492px;width:131px;height:2px;background:linear-gradient(90deg,#0000ff,#0000ff 18px,#0800ff 25px,#5c00ff 85px,#a800ff)"></i>
<i style="left:113px;top:494px;width:123px;height:2px;background:linear-gradient(90deg,#0000ff,#0000ff 16px,#4200ff 65px,#9d00ff)"></i>
<i style="left:115px;top:496px;width:115px;height:2px;background:linear-gradient(90deg,#0000ff,#0000ff 13px,#0f00ff 25px,#4a00ff 68px,#9400ff)"></i>
<i style="left:117px;top:498px;width:107px;height:2px;background:linear-gradient(90deg,#0000ff,#0000ff 10px,#1900ff 30px,#4f00ff 69px,#8a00ff)"></i>
<i style="left:119px;top:500px;width:99px;height:2px;background:linear-gradient(90deg,#0000ff,#0000ff 7px,#1600ff 25px,#5400ff 70px,#8100ff)"></i>
<i style="left:121px;top:502px;width:91px;height:2px;background:linear-gradient(90deg,#0000ff,#0400ff 8px,#2000ff 30px,#7800ff)"></i>
<i style="left:124px;top:504px;width:82px;height:2px;background:linear-gradient(90deg,#0000ff,#3900ff 45px,#6f00ff)"></i>
<i style="left:126px;top:506px;width:73px;height:2px;background:linear-gradient(90deg,#0300ff,#3700ff 41px,#6500ff)"></i>
<i style="left:129px;top:508px;width:64px;height:2px;background:linear-gradient(90deg,#0700ff,#5d00ff)"></i>
<i style="left:132px;top:510px;width:55px;height:2px;background:linear-gradient(90deg,#0c00ff,#5500ff)"></i>
<i style="left:136px;top:512px;width:45px;height:2px;background:linear-gradient(90deg,#1200ff,#4d00ff)"></i>
<i style="left:139px;top:514px;width:36px;height:2px;background:linear-gradient(90deg,#1600ff,#4500ff)"></i>
<i style="left:142px;top:516px;width:27px;height:2px;background:linear-gradient(90deg,#1b00ff,#3e00ff)"></i>
<i style="left:145px;top:518px;width:18px;height:2px;background:linear-gradient(90deg,#1f00ff,#3700ff)"></i>
<i style="left:150px;top:520px;width:6px;height:2px;background:linear-gradient(90deg,#2700ff,#2e00ff)"></i></div>
<svg width="1920" height="720"><path d="M1317.2 665.9L1316.3 666.0L1315.3 666.0L1314.3 665.8L1313.4 665.4L1312.7 665.1L1312.2 664.8L1311.6 664.4L1310.9 664.0L1310.1 663.5L1309.3 663.0L1308.4 662.4L1307.4 661.8L1306.8 661.4L1306.3 661.1L1305.6 660.7L1305.0 660.3L1304.3 659.9L1303.5 659.4L1302.7 658.9L1301.9 658.4L1301.0 657.9L1300.1 657.3L1299.2 656.7L1298.1 656.1L1297.1 655.4L1296.0 654.7L1294.8 654.0L1293.6 653.2L1292.4 652.3L1291.1 651.4L1289.7 650.4L1288.3 649.3L1286.9 648.2L1285.4 646.9L1283.8 645.6L1282.2 644.0L1280.4 642.2L1278.5 640.2L1276.4 638.0L1274.3 635.5L1272.0 632.8L1269.6 629.8L1267.2 626.5L1264.6 623.0L1261.9 619.0L1259.1 614.7L1256.1 609.9L1253.0 604.7L1249.8 599.0L1246.4 592.9L1242.9 586.2L1239.1 579.0L1235.2 571.2L1231.2 562.8L1227.0 553.7L1222.8 543.9L1218.7 533.5L1214.5 522.5L1210.4 510.8L1206.3 498.4L1202.2 485.4L1198.1 471.8L1194.1 457.5L1190.1 442.8L1186.3 427.7L1182.8 412.3L1179.4 396.8L1176.4 381.1L1173.7 365.5L1171.3 349.8L1169.2 334.3L1167.6 319.0L1166.3 304.1L1165.5 289.6L1165.2 275.5L1165.4 262.0L1166.1 248.9L1167.3 236.3L1169.1 224.3L1171.4 213.0L1174.3 202.6L1177.8 192.9L1181.8 184.2L1186.3 176.3L1191.3 169.5L1196.7 163.8L1202.5 159.2L1208.7 155.5L1215.1 152.8L1221.8 151.0L1228.6 150.0L1235.6 149.9L1242.7 150.4L1249.8 151.4L1257.0 152.9L1264.2 154.8L1271.5 156.9L1278.8 159.3L1286.0 161.9L1293.2 164.6L1300.2 167.4L1307.2 170.3L1314.0 173.2L1320.7 176.2L1327.4 179.3L1334.0 182.5L1340.6 185.7L1347.2 189.1L1353.7 192.4L1360.1 195.9L1366.6 199.4L1373.0 203.0L1379.4 206.7L1385.8 210.4L1392.2 214.2L1398.6 218.1L1405.0 221.9L1411.3 225.9L1417.6 229.9L1424.0 233.9L1430.3 237.9L1436.6 242.0L1443.0 246.1L1449.3 250.3L1455.6 254.5L1462.0 258.7L1468.3 262.9L1474.6 267.2L1480.9 271.4L1487.3 275.7L1493.6 280.0L1499.9 284.3L1506.2 288.6L1512.5 293.0L1518.8 297.3L1525.1 301.6L1531.4 306.0L1537.6 310.3L1543.9 314.6L1550.1 318.9L1556.3 323.3L1562.5 327.6L1568.7 331.9L1574.9 336.1L1581.0 340.4L1587.0 344.7L1593.1 348.9L1599.1 353.1L1605.1 357.3L1611.0 361.4L1616.9 365.5L1622.7 369.6L1628.5 373.6L1634.2 377.6L1639.8 381.5L1645.4 385.4L1651.0 389.3L1656.4 393.1L1661.8 396.8L1667.1 400.5L1672.3 404.2L1677.4 407.7L1682.5 411.3L1687.4 414.7L1692.2 418.1L1696.9 421.4L1701.4 424.5L1705.8 427.6L1710.0 430.5L1714.1 433.4L1718.2 436.2L1722.2 439.0L1726.0 441.7L1729.8 444.3L1733.4 446.9L1736.9 449.3L1740.3 451.6L1743.5 453.9L1746.6 456.0L1749.6 458.1L1752.4 460.1L1755.2 462.0L1757.8 463.9L1760.4 465.6L1762.8 467.3L1765.1 468.9L1767.3 470.5L1769.4 472.0L1771.4 473.4L1773.4 474.7L1775.2 476.0L1777.0 477.2L1778.6 478.4L1780.2 479.5L1781.8 480.6L1783.3 481.6L1784.7 482.6L1786.0 483.5L1787.3 484.4L1788.5 485.3L1789.7 486.1L1790.9 486.9L1792.0 487.7L1793.1 488.5L1794.1 489.2L1795.1 489.9L1796.1 490.6L1797.0 491.2L1797.9 491.8L1798.7 492.4L1799.6 493.0L1800.3 493.5L1801.1 494.1L1801.8 494.6L1802.5 495.0L1803.1 495.5L1803.7 495.9L1804.2 496.3L1804.8 496.6L1805.2 497.0L1806.2 497.6L1807.0 498.2L1807.7 498.7L1808.4 499.2L1809.0 499.6L1809.5 499.9L1810.1 500.3L1810.6 500.7L1811.2 501.1L1811.7 501.5L1812.2 501.8L1812.7 502.2L1814.9 503.7Z M1766.0 469.8L1397.0 239.2L1294.7 631.8Z" fill="#000" fill-opacity=".4" fill-rule="evenodd"/><path d="M1163.0 146.5H1908.0V667.6" fill="none" stroke="#8e8e8e" stroke-width="1.5"/><path d="M1163.0 146.5V673.6M1157.0 667.6H1908.0" fill="none" stroke="#a4a4a4" stroke-width="1.6"/><path d="M1251.5 667.6v6.5M1156.5 606.0h6.5" stroke="#a4a4a4" stroke-width="1.5"/><path d="M1339.9 667.6v6.5M1156.5 544.0h6.5" stroke="#a4a4a4" stroke-width="1.5"/><path d="M1428.3 667.6v6.5M1156.5 482.0h6.5" stroke="#a4a4a4" stroke-width="1.5"/><path d="M1516.8 667.6v6.5M1156.5 420.0h6.5" stroke="#a4a4a4" stroke-width="1.5"/><path d="M1605.2 667.6v6.5M1156.5 358.0h6.5" stroke="#a4a4a4" stroke-width="1.5"/><path d="M1693.7 667.6v6.5M1156.5 296.0h6.5" stroke="#a4a4a4" stroke-width="1.5"/><path d="M1782.2 667.6v6.5M1156.5 234.0h6.5" stroke="#a4a4a4" stroke-width="1.5"/><path d="M1870.6 667.6v6.5M1156.5 172.0h6.5" stroke="#a4a4a4" stroke-width="1.5"/><circle cx="1763.8" cy="469.1" r="4.4" fill="#e80000" stroke="#050000" stroke-width="2.6"/><rect x="1389.7" y="231.2" width="15.5" height="15.5" fill="none" stroke="#fff" stroke-width="2.3" stroke-opacity="0.8"/><rect x="1530.7" y="319.4" width="15.5" height="15.5" fill="none" stroke="#fff" stroke-width="2.3" stroke-opacity="0.8"/><rect x="1757.8" y="460.2" width="15.5" height="15.5" fill="none" stroke="#fff" stroke-width="2.3" stroke-opacity="0.8"/><rect x="1457.0" y="564.6" width="15.5" height="15.5" fill="none" stroke="#fff" stroke-width="2.3" stroke-opacity="0.8"/><rect x="1285.8" y="622.2" width="15.5" height="15.5" fill="none" stroke="#fff" stroke-width="2.3" stroke-opacity="0.8"/><rect x="1336.0" y="436.1" width="15.5" height="15.5" fill="none" stroke="#fff" stroke-width="2.3" stroke-opacity="0.8"/><rect x="1432.1" y="441.8" width="15.3" height="15.3" fill="none" stroke="#101810" stroke-width="2.3" stroke-opacity="0.88"/><circle cx="1403.6" cy="235.9" r="4.3" fill="#18b418" stroke="#062006" stroke-width="1.9"/><circle cx="1551.2" cy="331.0" r="4.3" fill="#c4bc20" stroke="#2a2800" stroke-width="1.9"/><circle cx="1288.0" cy="637.4" r="4.2" fill="#0000d8" stroke="#000078" stroke-width="2"/><circle cx="1430.1" cy="586.4" r="4.3" fill="#d400d0" stroke="#48005c" stroke-width="1.9"/><circle cx="1333.4" cy="477.8" r="4.3" fill="#00c8b4" stroke="#083c3c" stroke-width="1.9"/><circle cx="1426.7" cy="477.0" r="4.2" fill="#b4b4b4" stroke="#3c3c3c" stroke-width="1.5"/><circle cx="1429.9" cy="475.6" r="4.2" fill="#ffffff" stroke="#3c3c3c" stroke-width="1.5"/></svg>
<span class="t" style="left:1157.9px;top:677.8px;font-size:16px;line-height:16px;color:#d4d4d4;transform:scaleX(1.0450);-webkit-text-stroke:.25px currentColor;">0</span>
<span class="t" style="left:1145.7px;top:662.6px;font-size:16px;line-height:16px;color:#d4d4d4;transform:scaleX(1.0450);-webkit-text-stroke:.25px currentColor;">0</span>
<span class="t" style="left:1239.3px;top:677.8px;font-size:16px;line-height:16px;color:#d4d4d4;transform:scaleX(1.0450);-webkit-text-stroke:.25px currentColor;">0.1</span>
<span class="t" style="left:1131.8px;top:600.3px;font-size:16px;line-height:16px;color:#d4d4d4;transform:scaleX(1.0450);-webkit-text-stroke:.25px currentColor;">0.1</span>
<span class="t" style="left:1327.8px;top:677.8px;font-size:16px;line-height:16px;color:#d4d4d4;transform:scaleX(1.0450);-webkit-text-stroke:.25px currentColor;">0.2</span>
<span class="t" style="left:1131.8px;top:538.1px;font-size:16px;line-height:16px;color:#d4d4d4;transform:scaleX(1.0450);-webkit-text-stroke:.25px currentColor;">0.2</span>
<span class="t" style="left:1416.2px;top:677.8px;font-size:16px;line-height:16px;color:#d4d4d4;transform:scaleX(1.0450);-webkit-text-stroke:.25px currentColor;">0.3</span>
<span class="t" style="left:1131.8px;top:475.8px;font-size:16px;line-height:16px;color:#d4d4d4;transform:scaleX(1.0450);-webkit-text-stroke:.25px currentColor;">0.3</span>
<span class="t" style="left:1504.7px;top:677.8px;font-size:16px;line-height:16px;color:#d4d4d4;transform:scaleX(1.0450);-webkit-text-stroke:.25px currentColor;">0.4</span>
<span class="t" style="left:1131.8px;top:413.6px;font-size:16px;line-height:16px;color:#d4d4d4;transform:scaleX(1.0450);-webkit-text-stroke:.25px currentColor;">0.4</span>
<span class="t" style="left:1593.1px;top:677.8px;font-size:16px;line-height:16px;color:#d4d4d4;transform:scaleX(1.0450);-webkit-text-stroke:.25px currentColor;">0.5</span>
<span class="t" style="left:1131.8px;top:351.4px;font-size:16px;line-height:16px;color:#d4d4d4;transform:scaleX(1.0450);-webkit-text-stroke:.25px currentColor;">0.5</span>
<span class="t" style="left:1681.6px;top:677.8px;font-size:16px;line-height:16px;color:#d4d4d4;transform:scaleX(1.0450);-webkit-text-stroke:.25px currentColor;">0.6</span>
<span class="t" style="left:1131.8px;top:289.1px;font-size:16px;line-height:16px;color:#d4d4d4;transform:scaleX(1.0450);-webkit-text-stroke:.25px currentColor;">0.6</span>
<span class="t" style="left:1770.0px;top:677.8px;font-size:16px;line-height:16px;color:#d4d4d4;transform:scaleX(1.0450);-webkit-text-stroke:.25px currentColor;">0.7</span>
<span class="t" style="left:1131.8px;top:226.9px;font-size:16px;line-height:16px;color:#d4d4d4;transform:scaleX(1.0450);-webkit-text-stroke:.25px currentColor;">0.7</span>
<span class="t" style="left:1858.5px;top:677.8px;font-size:16px;line-height:16px;color:#d4d4d4;transform:scaleX(1.0450);-webkit-text-stroke:.25px currentColor;">0.8</span>
<span class="t" style="left:1131.8px;top:164.7px;font-size:16px;line-height:16px;color:#d4d4d4;transform:scaleX(1.0450);-webkit-text-stroke:.25px currentColor;">0.8</span>
<div class="a cie" style="left:1648.6px;top:153.8px;width:251.2px;height:195.6px;overflow:hidden"><i style="left:0px;top:0px;width:251px;height:2px;background:linear-gradient(90deg,#31ff94,#93ff89 124px,#c7ff84 181px,#ffff7e 236px,#fff075)"></i>
<i style="left:0px;top:2px;width:251px;height:2px;background:linear-gradient(90deg,#32ff95,#8eff8b 117px,#bdff86 169px,#ffff7f 235px,#ffef75)"></i>
<i style="left:0px;top:4px;width:251px;height:2px;background:linear-gradient(90deg,#32ff96,#97ff8b 126px,#c5ff87 176px,#ffff81 233px,#ffed76)"></i>
<i style="left:0px;top:6px;width:251px;height:2px;background:linear-gradient(90deg,#33ff97,#92ff8d 119px,#ffff82 232px,#ffec76)"></i>
<i style="left:0px;top:8px;width:251px;height:2px;background:linear-gradient(90deg,#34ff98,#94ff8e 120px,#c1ff8a 169px,#ffff84 230px,#ffea77)"></i>
<i style="left:0px;top:10px;width:251px;height:2px;background:linear-gradient(90deg,#35ff99,#64ff94 62px,#96ff8f 121px,#d0ff8a 183px,#ffff85 228px,#ffe977)"></i>
<i style="left:0px;top:12px;width:251px;height:2px;background:linear-gradient(90deg,#35ff9a,#60ff96 56px,#99ff91 123px,#ffff86 227px,#ffe777)"></i>
<i style="left:0px;top:14px;width:251px;height:2px;background:linear-gradient(90deg,#36ff9c,#65ff97 61px,#9bff92 124px,#ffff88 225px,#ffe578)"></i>
<i style="left:0px;top:16px;width:251px;height:2px;background:linear-gradient(90deg,#37ff9d,#61ff99 55px,#95ff94 116px,#ffff89 224px,#ffe478)"></i>
<i style="left:0px;top:18px;width:251px;height:2px;background:linear-gradient(90deg,#37ff9e,#98ff95 118px,#c6ff90 167px,#ffff8b 222px,#ffe279)"></i>
<i style="left:0px;top:20px;width:251px;height:2px;background:linear-gradient(90deg,#38ff9f,#91ff97 109px,#b5ff93 148px,#ffff8d 220px,#ffe179)"></i>
<i style="left:0px;top:22px;width:251px;height:2px;background:linear-gradient(90deg,#39ffa0,#94ff98 111px,#c0ff94 158px,#ffff8e 219px,#ffdf7a)"></i>
<i style="left:0px;top:24px;width:251px;height:2px;background:linear-gradient(90deg,#3affa2,#68ff9d 59px,#97ff99 113px,#ffff90 217px,#ffde7a)"></i>
<i style="left:0px;top:26px;width:251px;height:2px;background:linear-gradient(90deg,#3affa3,#9aff9a 115px,#ffff91 216px,#ffdc7a)"></i>
<i style="left:0px;top:28px;width:251px;height:2px;background:linear-gradient(90deg,#3bffa4,#92ff9c 105px,#ffff93 214px,#ffdb7b)"></i>
<i style="left:0px;top:30px;width:251px;height:2px;background:linear-gradient(90deg,#3cffa5,#95ff9d 107px,#ddff97 181px,#ffff94 212px,#ffda7b)"></i>
<i style="left:0px;top:32px;width:251px;height:2px;background:linear-gradient(90deg,#3dffa7,#6bffa3 58px,#99ff9f 110px,#ffff96 211px,#ffd87c)"></i>
<i style="left:0px;top:34px;width:251px;height:2px;background:linear-gradient(90deg,#3dffa8,#9cffa0 112px,#ffff97 209px,#ffd77c)"></i>
<i style="left:0px;top:36px;width:251px;height:2px;background:linear-gradient(90deg,#3effa9,#94ffa2 102px,#ccff9d 160px,#ffff99 208px,#ffd57c)"></i>
<i style="left:0px;top:38px;width:251px;height:2px;background:linear-gradient(90deg,#3fffaa,#97ffa3 104px,#ffff9b 206px,#ffd47d)"></i>
<i style="left:0px;top:40px;width:251px;height:2px;background:linear-gradient(90deg,#40ffac,#9bffa4 107px,#cfffa0 160px,#ffff9c 204px,#ffd27d)"></i>
<i style="left:0px;top:42px;width:251px;height:2px;background:linear-gradient(90deg,#40ffad,#a0ffa5 111px,#ffff9e 203px,#ffd17e)"></i>
<i style="left:0px;top:44px;width:251px;height:2px;background:linear-gradient(90deg,#41ffae,#95ffa8 98px,#d1ffa3 159px,#ffffa0 201px,#ffcf7e)"></i>
<i style="left:0px;top:46px;width:251px;height:2px;background:linear-gradient(90deg,#42ffb0,#9affa9 102px,#ffffa1 200px,#ffce7e)"></i>
<i style="left:0px;top:48px;width:251px;height:2px;background:linear-gradient(90deg,#43ffb1,#a0ffaa 107px,#ffffa3 198px,#ffdf8c 229px,#ffcd7f)"></i>
<i style="left:0px;top:50px;width:251px;height:2px;background:linear-gradient(90deg,#44ffb2,#93ffac 92px,#c5ffa9 143px,#ffffa5 196px,#ffcb7f)"></i>
<i style="left:0px;top:52px;width:251px;height:2px;background:linear-gradient(90deg,#44ffb4,#98ffae 96px,#ffffa6 195px,#ffdb8c 230px,#ffca80)"></i>
<i style="left:0px;top:54px;width:251px;height:2px;background:linear-gradient(90deg,#45ffb5,#9fffaf 102px,#ffffa8 193px,#ffde90 225px,#ffc880)"></i>
<i style="left:0px;top:56px;width:251px;height:2px;background:linear-gradient(90deg,#46ffb6,#91ffb1 86px,#d4ffad 153px,#ffffa9 192px,#ffe395 218px,#ffc780)"></i>
<i style="left:0px;top:58px;width:251px;height:2px;background:linear-gradient(90deg,#47ffb8,#96ffb2 90px,#cbffaf 143px,#ffffab 190px,#ffda90 226px,#ffc681)"></i>
<i style="left:0px;top:60px;width:251px;height:2px;background:linear-gradient(90deg,#48ffb9,#9dffb3 96px,#fffead 189px,#ffdd94 221px,#ffc481)"></i>
<i style="left:0px;top:62px;width:251px;height:2px;background:linear-gradient(90deg,#49ffbb,#8effb6 79px,#cdffb2 142px,#ffffaf 187px,#ffe299 214px,#ffc382)"></i>
<i style="left:0px;top:64px;width:251px;height:2px;background:linear-gradient(90deg,#49ffbc,#93ffb7 83px,#c4ffb4 132px,#ffffb0 185px,#ffd994 222px,#ffc182)"></i>
<i style="left:0px;top:66px;width:251px;height:2px;background:linear-gradient(90deg,#4affbd,#9bffb8 90px,#ffffb2 184px,#ffdc98 217px,#ffc082)"></i>
<i style="left:0px;top:68px;width:251px;height:2px;background:linear-gradient(90deg,#4bffbf,#8affbb 71px,#c6ffb7 131px,#ffffb4 182px,#ffe19d 210px,#ffbf83)"></i>
<i style="left:0px;top:70px;width:251px;height:2px;background:linear-gradient(90deg,#4cffc0,#8fffbc 75px,#beffba 122px,#fffeb5 181px,#ffd898 218px,#ffbd83)"></i>
<i style="left:0px;top:72px;width:251px;height:2px;background:linear-gradient(90deg,#4dffc2,#97ffbd 82px,#ffffb7 179px,#ffdb9c 213px,#ffbc83)"></i>
<i style="left:0px;top:74px;width:251px;height:2px;background:linear-gradient(90deg,#4effc3,#85ffc0 62px,#b1ffbe 106px,#ffffb9 177px,#ffd498 219px,#ffbb84)"></i>
<i style="left:0px;top:76px;width:251px;height:2px;background:linear-gradient(90deg,#4fffc5,#79ffc2 48px,#b3ffbf 107px,#ffffbb 176px,#ffd69b 215px,#ffb984)"></i>
<i style="left:0px;top:78px;width:251px;height:2px;background:linear-gradient(90deg,#50ffc6,#adffc1 100px,#ffffbd 174px,#ffd99f 210px,#ffb885)"></i>
<i style="left:0px;top:80px;width:251px;height:2px;background:linear-gradient(90deg,#50ffc8,#7fffc5 52px,#bcffc2 113px,#fffebe 173px,#ffd39c 215px,#ffb785)"></i>
<i style="left:0px;top:82px;width:251px;height:2px;background:linear-gradient(90deg,#51ffc9,#b4ffc4 104px,#ffffc0 171px,#ffd59f 211px,#ffb585)"></i>
<i style="left:0px;top:84px;width:251px;height:2px;background:linear-gradient(90deg,#52ffcb,#aaffc7 93px,#ffffc2 169px,#ffd8a3 206px,#ffb486)"></i>
<i style="left:0px;top:86px;width:251px;height:2px;background:linear-gradient(90deg,#53ffcc,#b8ffc8 105px,#ffffc4 168px,#ffd19f 212px,#ffb386)"></i>
<i style="left:0px;top:88px;width:251px;height:2px;background:linear-gradient(90deg,#54ffce,#b1ffca 97px,#ffffc6 166px,#ffd3a2 208px,#ffb286)"></i>
<i style="left:0px;top:90px;width:251px;height:2px;background:linear-gradient(90deg,#55ffd0,#a8ffcc 87px,#fffec8 165px,#ffd6a6 203px,#ffb087)"></i>
<i style="left:0px;top:92px;width:251px;height:2px;background:linear-gradient(90deg,#56ffd1,#9cffce 74px,#ffffca 163px,#ffd0a3 208px,#ffaf87)"></i>
<i style="left:0px;top:94px;width:251px;height:2px;background:linear-gradient(90deg,#57ffd3,#afffcf 91px,#ffffcc 161px,#ffd2a6 204px,#ffae87)"></i>
<i style="left:0px;top:96px;width:251px;height:2px;background:linear-gradient(90deg,#58ffd4,#a7ffd1 82px,#ffffcd 160px,#ffd4aa 200px,#ffac88)"></i>
<i style="left:0px;top:98px;width:251px;height:2px;background:linear-gradient(90deg,#59ffd6,#b3ffd3 92px,#ffffd0 158px,#ffcea6 205px,#ffab88)"></i>
<i style="left:0px;top:100px;width:251px;height:2px;background:linear-gradient(90deg,#5affd8,#adffd5 85px,#fffed1 157px,#ffd0aa 201px,#ffaa89)"></i>
<i style="left:0px;top:102px;width:251px;height:2px;background:linear-gradient(90deg,#5bffd9,#a6ffd7 77px,#ffffd4 155px,#ffd2ad 197px,#ffa989)"></i>
<i style="left:0px;top:104px;width:251px;height:2px;background:linear-gradient(90deg,#5cffdb,#b1ffd8 86px,#ffffd6 153px,#ffe3bd 178px,#ffccaa 202px,#ffa789)"></i>
<i style="left:0px;top:106px;width:251px;height:2px;background:linear-gradient(90deg,#5dffdd,#abffda 79px,#ffffd7 152px,#ffcead 198px,#ffa68a)"></i>
<i style="left:0px;top:108px;width:251px;height:2px;background:linear-gradient(90deg,#5effde,#a6ffdc 73px,#ffffda 150px,#ffd0b0 194px,#ffa58a)"></i>
<i style="left:0px;top:110px;width:251px;height:2px;background:linear-gradient(90deg,#5fffe0,#afffde 80px,#fffedb 149px,#ffcaad 199px,#ffa48a)"></i>
<i style="left:0px;top:112px;width:251px;height:2px;background:linear-gradient(90deg,#60ffe2,#aaffe0 74px,#ffffde 147px,#ffccb0 195px,#ffa28b)"></i>
<i style="left:0px;top:114px;width:251px;height:2px;background:linear-gradient(90deg,#61ffe3,#b2ffe1 80px,#ffffe0 145px,#ffceb4 191px,#ffa18b)"></i>
<i style="left:0px;top:116px;width:251px;height:2px;background:linear-gradient(90deg,#62ffe5,#aeffe3 75px,#ffffe1 144px,#ffe8cd 163px,#ffc8b0 196px,#ffa08b)"></i>
<i style="left:0px;top:118px;width:251px;height:2px;background:linear-gradient(90deg,#63ffe7,#aaffe6 70px,#ffffe4 142px,#ffe3cb 166px,#ffcab4 192px,#ff9f8c)"></i>
<i style="left:0px;top:120px;width:251px;height:2px;background:linear-gradient(90deg,#64ffe9,#b1ffe7 75px,#fffee5 141px,#ffcbb6 189px,#ff9d8c)"></i>
<i style="left:0px;top:122px;width:251px;height:2px;background:linear-gradient(90deg,#65ffeb,#adffe9 70px,#ffffe8 139px,#ffe7d2 159px,#ffc6b3 193px,#ff9c8c)"></i>
<i style="left:0px;top:124px;width:251px;height:2px;background:linear-gradient(90deg,#66ffec,#b3ffeb 74px,#ffffea 137px,#ffe3d0 161px,#ffc7b6 190px,#ff9b8d)"></i>
<i style="left:0px;top:126px;width:251px;height:2px;background:linear-gradient(90deg,#68ffee,#a5ffed 60px,#ffffec 136px,#ffead9 153px,#ffc9ba 186px,#ffb5a6 211px,#ff9a8d)"></i>
<i style="left:0px;top:128px;width:251px;height:2px;background:linear-gradient(90deg,#69fff0,#acffef 65px,#ffffee 134px,#ffe7d8 154px,#ffc4b7 190px,#ff998d)"></i>
<i style="left:0px;top:130px;width:251px;height:2px;background:linear-gradient(90deg,#6afff2,#b2fff1 69px,#fffef0 133px,#ffe3d6 156px,#ffc1b5 192px,#ff978e)"></i>
<i style="left:0px;top:132px;width:251px;height:2px;background:linear-gradient(90deg,#6bfff4,#b7fff3 72px,#fffff3 131px,#ffe4d8 154px,#ffc7bd 183px,#ffaea5 214px,#ff968e)"></i>
<i style="left:0px;top:134px;width:251px;height:2px;background:linear-gradient(90deg,#6cfff6,#b4fff5 68px,#fffff5 129px,#ffe7de 149px,#ffc1b9 188px,#ff958e)"></i>
<i style="left:0px;top:136px;width:251px;height:2px;background:linear-gradient(90deg,#6dfff8,#b1fff7 64px,#fffff7 128px,#ffe4dd 150px,#ffc3bd 184px,#ffada7 212px,#ff948f)"></i>
<i style="left:0px;top:138px;width:251px;height:2px;background:linear-gradient(90deg,#6efffa,#bdfff9 73px,#fffff9 126px,#ffe4de 149px,#ffc4c0 181px,#ffada8 211px,#ff938f)"></i>
<i style="left:0px;top:140px;width:251px;height:2px;background:linear-gradient(90deg,#70fffc,#b3fffb 63px,#fffefb 125px,#ffdeda 153px,#ffbfbd 185px,#ffa5a2 220px,#ff928f)"></i>
<i style="left:0px;top:142px;width:251px;height:2px;background:linear-gradient(90deg,#71fffe,#b0fffe 59px,#fffffe 123px,#ffe6e4 144px,#ffc7c6 174px,#ffabaa 209px,#ff9090)"></i>
<i style="left:0px;top:144px;width:251px;height:2px;background:linear-gradient(90deg,#72feff,#b0feff 58px,#fffeff 122px,#ffe0e1 147px,#ffc2c2 179px,#ffa8a9 211px,#ff8f90)"></i>
<i style="left:0px;top:146px;width:251px;height:2px;background:linear-gradient(90deg,#72fcff,#b7fcff 64px,#fffcff 122px,#ffdee0 148px,#ffbdc0 182px,#ffa3a5 217px,#ff8e90)"></i>
<i style="left:0px;top:148px;width:251px;height:2px;background:linear-gradient(90deg,#72fbff,#befaff 70px,#fffaff 122px,#ffd8dc 152px,#ffbcc0 182px,#ffa6ab 210px,#ff8d91)"></i>
<i style="left:0px;top:150px;width:251px;height:2px;background:linear-gradient(90deg,#73f9ff,#b6f8ff 63px,#fff7fe 123px,#ffe1e9 141px,#ffbfc6 176px,#ffa2a7 215px,#ff8c91)"></i>
<i style="left:0px;top:152px;width:251px;height:2px;background:linear-gradient(90deg,#73f7ff,#adf6ff 55px,#fff5fe 123px,#ffdde7 143px,#ffb6be 185px,#ff9ca4 221px,#ff8b91)"></i>
<i style="left:0px;top:154px;width:251px;height:2px;background:linear-gradient(90deg,#73f5ff,#acf4ff 54px,#fff3ff 123px,#ffd7e2 147px,#ffbbc5 177px,#ffa0a9 213px,#ff8992)"></i>
<i style="left:0px;top:156px;width:251px;height:2px;background:linear-gradient(90deg,#73f3ff,#b4f2ff 61px,#fff1ff 123px,#ffd2de 151px,#ffb6c1 182px,#ffa0ab 211px,#ff8892)"></i>
<i style="left:0px;top:158px;width:251px;height:2px;background:linear-gradient(90deg,#74f1ff,#b3f0ff 60px,#ffefff 123px,#ffdae9 141px,#ffb6c3 180px,#ff9ca9 215px,#ff8792)"></i>
<i style="left:0px;top:160px;width:251px;height:2px;background:linear-gradient(90deg,#74efff,#bbeeff 67px,#ffedff 123px,#ffdaec 139px,#ffb6c5 178px,#ff9fac 210px,#ff8693)"></i>
<i style="left:0px;top:162px;width:251px;height:2px;background:linear-gradient(90deg,#74edff,#baecff 66px,#ffeaff 123px,#ffccdf 151px,#ffb1c1 183px,#ff97a7 219px,#ff8593)"></i>
<i style="left:0px;top:164px;width:251px;height:2px;background:linear-gradient(90deg,#75ebff,#baeaff 66px,#ffe8ff 123px,#ffcee2 148px,#ffb1c3 181px,#ff95a6 220px,#ff8493)"></i>
<i style="left:0px;top:166px;width:251px;height:2px;background:linear-gradient(90deg,#75e9ff,#b9e8ff 65px,#ffe6fe 124px,#ffc4db 156px,#ffb0c4 180px,#ff95a8 218px,#ff8393)"></i>
<i style="left:0px;top:168px;width:251px;height:2px;background:linear-gradient(90deg,#75e7ff,#b8e6ff 64px,#ffe4fe 124px,#ffc6df 152px,#ffb0c6 178px,#ff95a9 216px,#ff8294)"></i>
<i style="left:0px;top:170px;width:251px;height:2px;background:linear-gradient(90deg,#75e6ff,#b8e4ff 64px,#ffe2ff 124px,#ffcde8 143px,#ffb0c8 176px,#ff97ac 212px,#ff8094)"></i>
<i style="left:0px;top:172px;width:251px;height:2px;background:linear-gradient(90deg,#76e4ff,#b7e2ff 63px,#ffe0ff 124px,#ffc9e5 146px,#ffabc4 181px,#ff95ad 212px,#ff7f94)"></i>
<i style="left:0px;top:174px;width:251px;height:2px;background:linear-gradient(90deg,#76e2ff,#b6e0ff 62px,#ffdeff 124px,#ffc3e1 150px,#ffabc6 179px,#ff95ae 210px,#ff7e95)"></i>
<i style="left:0px;top:176px;width:251px;height:2px;background:linear-gradient(90deg,#76e0ff,#c0deff 71px,#ffdcff 124px,#ffc4e5 147px,#ffa6c2 184px,#ff7d95)"></i>
<i style="left:0px;top:178px;width:251px;height:2px;background:linear-gradient(90deg,#77deff,#b4dcff 60px,#ffdaff 124px,#ffaac9 176px,#ff94b0 208px,#ff7c95)"></i>
<i style="left:0px;top:180px;width:251px;height:2px;background:linear-gradient(90deg,#77ddff,#bfdaff 70px,#ffd8ff 124px,#ffbee2 150px,#ffa5c5 181px,#ff94b1 207px,#ff7b96)"></i>
<i style="left:0px;top:182px;width:251px;height:2px;background:linear-gradient(90deg,#77dbff,#b2d9ff 58px,#ffd5fe 125px,#ffc0e6 146px,#ffa1c2 185px,#ff7a96)"></i>
<i style="left:0px;top:184px;width:251px;height:2px;background:linear-gradient(90deg,#77d9ff,#b1d7ff 57px,#ffd3fe 125px,#ffb9e1 152px,#ffa1c4 183px,#ff7996)"></i>
<i style="left:0px;top:186px;width:251px;height:2px;background:linear-gradient(90deg,#78d7ff,#bdd4ff 68px,#ffd2ff 125px,#ffbae4 149px,#ffa0c5 182px,#ff8aab 217px,#ff7897)"></i>
<i style="left:0px;top:188px;width:251px;height:2px;background:linear-gradient(90deg,#78d5ff,#bcd3ff 67px,#ffd0ff 125px,#ffb5e0 153px,#ff9cc2 186px,#ff7797)"></i>
<i style="left:0px;top:190px;width:251px;height:2px;background:linear-gradient(90deg,#78d4ff,#bbd1ff 66px,#ffceff 125px,#ffbbe8 145px,#ff9bc3 185px,#ff7697)"></i>
<i style="left:0px;top:192px;width:251px;height:2px;background:linear-gradient(90deg,#78d2ff,#bacfff 65px,#ffccff 125px,#ffb6e4 149px,#ff9bc5 183px,#ff7597)"></i>
<i style="left:0px;top:194px;width:251px;height:2px;background:linear-gradient(90deg,#79d0ff,#bacdff 65px,#ffcaff 125px,#ff9bc6 182px,#ff85ac 217px,#ff7498)"></i></div>
<svg width="1920" height="720"><rect x="1649.1999999999998" y="154.4" width="250.0" height="194.4" fill="none" stroke="#cfcfcf" stroke-opacity=".62" stroke-width="1.3"/><rect x="1766.8" y="243.9" width="15.5" height="15.5" fill="none" stroke="#111" stroke-width="2.2"/><ellipse cx="1737.8" cy="339.4" rx="4.4" ry="3.9" fill="#d0d0d0" stroke="#333" stroke-width="1.2"/><ellipse cx="1741.6" cy="337.4" rx="4.4" ry="3.9" fill="#fcfcfc" stroke="#333" stroke-width="1.2"/></svg>
<div class="a " style="left:1612.0px;top:633.2px;width:292.5px;height:33.2px;background:#303030"></div>
<span class="t" style="left:1614.0px;top:638.0px;font-size:22px;line-height:22px;color:#ededed;transform:scaleX(1.0272);white-space:pre;-webkit-text-stroke:.25px currentColor;">Gamut Coverage:  99.4%</span>
<span class="t" style="left:16.5px;top:741.5px;font-size:32.5px;line-height:32.5px;color:#f4f4f4;transform:scaleX(1.0589);-webkit-text-stroke:.15px currentColor;">Current Reading</span>
<span class="t" style="left:16.8px;top:791.2px;font-size:26px;line-height:26px;color:#f2f2f2;transform:scaleX(1.1012);-webkit-text-stroke:.15px currentColor;">x: 0.3019</span>
<span class="t" style="left:16.8px;top:834.3px;font-size:26px;line-height:26px;color:#f2f2f2;transform:scaleX(1.1199);-webkit-text-stroke:.15px currentColor;">y: 0.3088</span>
<span class="t" style="left:16.8px;top:877.5px;font-size:26px;line-height:26px;color:#f2f2f2;transform:scaleX(1.1048);-webkit-text-stroke:.15px currentColor;">fL: 124.7</span>
<span class="t" style="left:16.8px;top:920.6px;font-size:26px;line-height:26px;color:#f2f2f2;transform:scaleX(1.1593);-webkit-text-stroke:.15px currentColor;">cd/m²: 427.26</span>
<svg width="720" height="980"><rect x="407.0" y="747.7" width="291.20000000000005" height="190.5" fill="#242424"/><path d="M402.0 795.3H698.2" stroke="#8a8a8a" stroke-width="1.4"/><path d="M402.0 843.0H698.2" stroke="#8a8a8a" stroke-width="1.4"/><path d="M402.0 890.6H698.2" stroke="#8a8a8a" stroke-width="1.4"/><path d="M402.0 747.7H698.2V944.7M402.0 938.2H698.2M407.0 747.7V944.7" fill="none" stroke="#999" stroke-width="1.5"/><defs><linearGradient id="rr" x1="0" y1="0" x2="0" y2="1"><stop offset="0" stop-color="#ff0808"/><stop offset=".55" stop-color="#f80000"/><stop offset="1" stop-color="#a80000"/></linearGradient>
<linearGradient id="rg" x1="0" y1="0" x2="0" y2="1"><stop offset="0" stop-color="#009400"/><stop offset=".5" stop-color="#008400"/><stop offset="1" stop-color="#005800"/></linearGradient>
<linearGradient id="rb" x1="0" y1="0" x2="0" y2="1"><stop offset="0" stop-color="#2828ff"/><stop offset=".35" stop-color="#0404fc"/><stop offset=".7" stop-color="#0000d0"/><stop offset="1" stop-color="#000080"/></linearGradient></defs><rect x="437.6" y="818.8" width="76.8" height="24.2" fill="url(#rr)" stroke="#0c0c0c" stroke-width="1.5"/><rect x="515.6" y="843.0" width="76.8" height="16.2" fill="url(#rg)" stroke="#0c0c0c" stroke-width="1.5"/><rect x="593.8" y="757.8" width="77.2" height="85.2" fill="url(#rb)" stroke="#0c0c0c" stroke-width="1.5"/></svg>
<span class="t" style="left:383.0px;top:740.6px;font-size:16px;line-height:16px;color:#d4d4d4;">40</span>
<span class="t" style="left:383.0px;top:788.2px;font-size:16px;line-height:16px;color:#d4d4d4;">20</span>
<span class="t" style="left:391.9px;top:835.8px;font-size:16px;line-height:16px;color:#d4d4d4;">0</span>
<span class="t" style="left:377.7px;top:883.4px;font-size:16px;line-height:16px;color:#d4d4d4;">-20</span>
<span class="t" style="left:377.7px;top:931.1px;font-size:16px;line-height:16px;color:#d4d4d4;">-40</span>
<span class="t" style="left:489.3px;top:728.2px;font-size:16px;line-height:16px;color:#d4d4d4;transform:scaleX(0.9903);">RGB Balance</span>
<span class="t" style="left:532.1px;top:941.4px;font-size:16px;line-height:16px;color:#d4d4d4;">100W</span>
<div class="a " style="left:723.0px;top:723.2px;width:797.6px;height:41.0px;background:linear-gradient(#323232 0,#2d2d2d 48%,#161616 51%,#101010 100%)"></div>
<div class="a " style="left:723.0px;top:723.2px;width:16.7px;height:41.0px;background:#020202"></div>
<div class="a " style="left:739.5px;top:764.6px;width:781.1px;height:37.2px;background:#3d3d3d"></div>
<div class="a " style="left:723.0px;top:764.6px;width:16.7px;height:37.2px;background:linear-gradient(90deg,#262626,#303030 60%)"></div>
<div class="a " style="left:739.5px;top:802.8px;width:781.1px;height:36.9px;background:#767676"></div>
<div class="a " style="left:723.0px;top:802.8px;width:16.7px;height:36.9px;background:linear-gradient(90deg,#262626,#565656 60%)"></div>
<div class="a " style="left:739.5px;top:840.8px;width:781.1px;height:37.3px;background:#3d3d3d"></div>
<div class="a " style="left:723.0px;top:840.8px;width:16.7px;height:37.3px;background:linear-gradient(90deg,#262626,#303030 60%)"></div>
<div class="a " style="left:739.5px;top:879.2px;width:781.1px;height:36.9px;background:#767676"></div>
<div class="a " style="left:723.0px;top:879.2px;width:16.7px;height:36.9px;background:linear-gradient(90deg,#262626,#565656 60%)"></div>
<div class="a " style="left:739.5px;top:917.3px;width:781.1px;height:37.5px;background:#3d3d3d"></div>
<div class="a " style="left:723.0px;top:917.3px;width:16.7px;height:37.5px;background:linear-gradient(90deg,#262626,#303030 60%)"></div>
<span class="t" style="left:827.6px;top:733.9px;font-size:23.5px;line-height:23.5px;color:#ececec;transform:scaleX(0.7850);-webkit-text-stroke:.3px #ececec;">White</span>
<span class="t" style="left:918.8px;top:733.9px;font-size:23.5px;line-height:23.5px;color:#ececec;transform:scaleX(0.7850);-webkit-text-stroke:.3px #ececec;">Red</span>
<span class="t" style="left:998.8px;top:733.9px;font-size:23.5px;line-height:23.5px;color:#ececec;transform:scaleX(0.7850);-webkit-text-stroke:.3px #ececec;">Green</span>
<span class="t" style="left:1090.5px;top:733.9px;font-size:23.5px;line-height:23.5px;color:#ececec;transform:scaleX(0.7850);-webkit-text-stroke:.3px #ececec;">Blue</span>
<span class="t" style="left:1170.4px;top:733.9px;font-size:23.5px;line-height:23.5px;color:#ececec;transform:scaleX(0.7850);-webkit-text-stroke:.3px #ececec;">Cyan</span>
<span class="t" style="left:1262.1px;top:733.9px;font-size:23.5px;line-height:23.5px;color:#ececec;transform:scaleX(0.7850);-webkit-text-stroke:.3px #ececec;">Magenta</span>
<span class="t" style="left:1343.8px;top:733.9px;font-size:23.5px;line-height:23.5px;color:#ececec;transform:scaleX(0.7850);-webkit-text-stroke:.3px #ececec;">Yellow</span>
<span class="t" style="left:1435.0px;top:733.9px;font-size:23.5px;line-height:23.5px;color:#ececec;transform:scaleX(0.7850);-webkit-text-stroke:.3px #ececec;">100W</span>
<span class="t" style="left:745.5px;top:773.5px;font-size:23.5px;line-height:23.5px;color:#e6e6e6;transform:scaleX(0.7850);-webkit-text-stroke:.3px #e6e6e6;">x: CIE31</span>
<span class="t" style="left:827.6px;top:773.5px;font-size:23.5px;line-height:23.5px;color:#e6e6e6;transform:scaleX(0.7850);-webkit-text-stroke:.3px #e6e6e6;">0.3001</span>
<span class="t" style="left:918.8px;top:773.5px;font-size:23.5px;line-height:23.5px;color:#e6e6e6;transform:scaleX(0.7850);-webkit-text-stroke:.3px #e6e6e6;">0.6784</span>
<span class="t" style="left:998.8px;top:773.5px;font-size:23.5px;line-height:23.5px;color:#e6e6e6;transform:scaleX(0.7850);-webkit-text-stroke:.3px #e6e6e6;">0.2724</span>
<span class="t" style="left:1090.5px;top:773.5px;font-size:23.5px;line-height:23.5px;color:#e6e6e6;transform:scaleX(0.7850);-webkit-text-stroke:.3px #e6e6e6;">0.1424</span>
<span class="t" style="left:1170.4px;top:773.5px;font-size:23.5px;line-height:23.5px;color:#e6e6e6;transform:scaleX(0.7850);-webkit-text-stroke:.3px #e6e6e6;">0.1930</span>
<span class="t" style="left:1262.1px;top:773.5px;font-size:23.5px;line-height:23.5px;color:#e6e6e6;transform:scaleX(0.7850);-webkit-text-stroke:.3px #e6e6e6;">0.3023</span>
<span class="t" style="left:1343.8px;top:773.5px;font-size:23.5px;line-height:23.5px;color:#e6e6e6;transform:scaleX(0.7850);-webkit-text-stroke:.3px #e6e6e6;">0.4392</span>
<span class="t" style="left:1435.0px;top:773.5px;font-size:23.5px;line-height:23.5px;color:#e6e6e6;transform:scaleX(0.7850);-webkit-text-stroke:.3px #e6e6e6;">0.3019</span>
<span class="t" style="left:745.5px;top:811.6px;font-size:23.5px;line-height:23.5px;color:#e6e6e6;transform:scaleX(0.7850);-webkit-text-stroke:.3px #e6e6e6;">y: CIE31</span>
<span class="t" style="left:827.6px;top:811.6px;font-size:23.5px;line-height:23.5px;color:#e6e6e6;transform:scaleX(0.7850);-webkit-text-stroke:.3px #e6e6e6;">0.3078</span>
<span class="t" style="left:918.8px;top:811.6px;font-size:23.5px;line-height:23.5px;color:#e6e6e6;transform:scaleX(0.7850);-webkit-text-stroke:.3px #e6e6e6;">0.3182</span>
<span class="t" style="left:998.8px;top:811.6px;font-size:23.5px;line-height:23.5px;color:#e6e6e6;transform:scaleX(0.7850);-webkit-text-stroke:.3px #e6e6e6;">0.6947</span>
<span class="t" style="left:1090.5px;top:811.6px;font-size:23.5px;line-height:23.5px;color:#e6e6e6;transform:scaleX(0.7850);-webkit-text-stroke:.3px #e6e6e6;">0.0495</span>
<span class="t" style="left:1170.4px;top:811.6px;font-size:23.5px;line-height:23.5px;color:#e6e6e6;transform:scaleX(0.7850);-webkit-text-stroke:.3px #e6e6e6;">0.3046</span>
<span class="t" style="left:1262.1px;top:811.6px;font-size:23.5px;line-height:23.5px;color:#e6e6e6;transform:scaleX(0.7850);-webkit-text-stroke:.3px #e6e6e6;">0.1297</span>
<span class="t" style="left:1343.8px;top:811.6px;font-size:23.5px;line-height:23.5px;color:#e6e6e6;transform:scaleX(0.7850);-webkit-text-stroke:.3px #e6e6e6;">0.5409</span>
<span class="t" style="left:1435.0px;top:811.6px;font-size:23.5px;line-height:23.5px;color:#e6e6e6;transform:scaleX(0.7850);-webkit-text-stroke:.3px #e6e6e6;">0.3088</span>
<span class="t" style="left:745.5px;top:849.8px;font-size:23.5px;line-height:23.5px;color:#e6e6e6;transform:scaleX(0.7850);-webkit-text-stroke:.3px #e6e6e6;">Y</span>
<span class="t" style="left:827.6px;top:849.8px;font-size:23.5px;line-height:23.5px;color:#e6e6e6;transform:scaleX(0.7850);-webkit-text-stroke:.3px #e6e6e6;">229.0172</span>
<span class="t" style="left:918.8px;top:849.8px;font-size:23.5px;line-height:23.5px;color:#e6e6e6;transform:scaleX(0.7850);-webkit-text-stroke:.3px #e6e6e6;">62.2926</span>
<span class="t" style="left:998.8px;top:849.8px;font-size:23.5px;line-height:23.5px;color:#e6e6e6;transform:scaleX(0.7850);-webkit-text-stroke:.3px #e6e6e6;">210.4597</span>
<span class="t" style="left:1090.5px;top:849.8px;font-size:23.5px;line-height:23.5px;color:#e6e6e6;transform:scaleX(0.7850);-webkit-text-stroke:.3px #e6e6e6;">19.7489</span>
<span class="t" style="left:1170.4px;top:849.8px;font-size:23.5px;line-height:23.5px;color:#e6e6e6;transform:scaleX(0.7850);-webkit-text-stroke:.3px #e6e6e6;">193.2043</span>
<span class="t" style="left:1262.1px;top:849.8px;font-size:23.5px;line-height:23.5px;color:#e6e6e6;transform:scaleX(0.7850);-webkit-text-stroke:.3px #e6e6e6;">72.6446</span>
<span class="t" style="left:1343.8px;top:849.8px;font-size:23.5px;line-height:23.5px;color:#e6e6e6;transform:scaleX(0.7850);-webkit-text-stroke:.3px #e6e6e6;">242.9780</span>
<span class="t" style="left:1435.0px;top:849.8px;font-size:23.5px;line-height:23.5px;color:#e6e6e6;transform:scaleX(0.7850);-webkit-text-stroke:.3px #e6e6e6;">427.2560</span>
<span class="t" style="left:745.5px;top:888.0px;font-size:23.5px;line-height:23.5px;color:#e6e6e6;transform:scaleX(0.7850);-webkit-text-stroke:.3px #e6e6e6;">Target Y</span>
<span class="t" style="left:827.6px;top:888.0px;font-size:23.5px;line-height:23.5px;color:#e6e6e6;transform:scaleX(0.7850);-webkit-text-stroke:.3px #e6e6e6;">229.0172</span>
<span class="t" style="left:918.8px;top:888.0px;font-size:23.5px;line-height:23.5px;color:#e6e6e6;transform:scaleX(0.7850);-webkit-text-stroke:.3px #e6e6e6;">47.9882</span>
<span class="t" style="left:998.8px;top:888.0px;font-size:23.5px;line-height:23.5px;color:#e6e6e6;transform:scaleX(0.7850);-webkit-text-stroke:.3px #e6e6e6;">165.2397</span>
<span class="t" style="left:1090.5px;top:888.0px;font-size:23.5px;line-height:23.5px;color:#e6e6e6;transform:scaleX(0.7850);-webkit-text-stroke:.3px #e6e6e6;">15.7894</span>
<span class="t" style="left:1170.4px;top:888.0px;font-size:23.5px;line-height:23.5px;color:#e6e6e6;transform:scaleX(0.7850);-webkit-text-stroke:.3px #e6e6e6;">181.0290</span>
<span class="t" style="left:1262.1px;top:888.0px;font-size:23.5px;line-height:23.5px;color:#e6e6e6;transform:scaleX(0.7850);-webkit-text-stroke:.3px #e6e6e6;">63.7775</span>
<span class="t" style="left:1343.8px;top:888.0px;font-size:23.5px;line-height:23.5px;color:#e6e6e6;transform:scaleX(0.7850);-webkit-text-stroke:.3px #e6e6e6;">213.2279</span>
<span class="t" style="left:1435.0px;top:888.0px;font-size:23.5px;line-height:23.5px;color:#e6e6e6;transform:scaleX(0.7850);-webkit-text-stroke:.3px #e6e6e6;">427.2560</span>
<span class="t" style="left:745.5px;top:926.4px;font-size:23.5px;line-height:23.5px;color:#e6e6e6;transform:scaleX(0.7850);-webkit-text-stroke:.3px #e6e6e6;">ΔE 2000</span>
<span class="t" style="left:827.6px;top:926.4px;font-size:23.5px;line-height:23.5px;color:#e6e6e6;transform:scaleX(0.7850);-webkit-text-stroke:.3px #e6e6e6;">15.5646</span>
<span class="t" style="left:918.8px;top:926.4px;font-size:23.5px;line-height:23.5px;color:#e6e6e6;transform:scaleX(0.7850);-webkit-text-stroke:.3px #e6e6e6;">4.9249</span>
<span class="t" style="left:998.8px;top:926.4px;font-size:23.5px;line-height:23.5px;color:#e6e6e6;transform:scaleX(0.7850);-webkit-text-stroke:.3px #e6e6e6;">5.9360</span>
<span class="t" style="left:1090.5px;top:926.4px;font-size:23.5px;line-height:23.5px;color:#e6e6e6;transform:scaleX(0.7850);-webkit-text-stroke:.3px #e6e6e6;">4.5428</span>
<span class="t" style="left:1170.4px;top:926.4px;font-size:23.5px;line-height:23.5px;color:#e6e6e6;transform:scaleX(0.7850);-webkit-text-stroke:.3px #e6e6e6;">11.4577</span>
<span class="t" style="left:1262.1px;top:926.4px;font-size:23.5px;line-height:23.5px;color:#e6e6e6;transform:scaleX(0.7850);-webkit-text-stroke:.3px #e6e6e6;">5.3586</span>
<span class="t" style="left:1343.8px;top:926.4px;font-size:23.5px;line-height:23.5px;color:#e6e6e6;transform:scaleX(0.7850);-webkit-text-stroke:.3px #e6e6e6;">4.6340</span>
<span class="t" style="left:1435.0px;top:926.4px;font-size:23.5px;line-height:23.5px;color:#e6e6e6;transform:scaleX(0.7850);-webkit-text-stroke:.3px #e6e6e6;">17.6455</span>
<div class="a " style="left:0.0px;top:958.0px;width:1920.0px;height:8.5px;background:linear-gradient(#333,#2a2a2a 60%,#272727)"></div>
<div class="a " style="left:0.0px;top:966.3px;width:1920.0px;height:69.0px;background:linear-gradient(#484848,#404040 20%,#303030 60%,#232323)"></div>
<div class="a " style="left:2.0px;top:966.0px;width:167.7px;height:72.0px;background:linear-gradient(#a0a0a0,#8a8a8a 12%,#787878 50%,#6a6a6a 70%,#585858 96%);border:1.5px solid #a8a8a8;border-bottom:none;border-radius:5px 5px 0 0"></div>
<div class="a " style="left:8.2px;top:972.6px;width:156.8px;height:38.8px;background:#bfbfbf;border:1.5px solid #cbcbcb;border-radius:4px"></div>
<span class="t" style="left:71.4px;top:1020.3px;font-size:10.5px;line-height:10.5px;color:#262626;font-weight:bold;-webkit-text-stroke:0;opacity:.85;">White</span>
<div class="a " style="left:173.1px;top:966.0px;width:167.7px;height:72.0px;background:linear-gradient(#a0a0a0,#8a8a8a 12%,#787878 50%,#6a6a6a 70%,#585858 96%);border:1.5px solid #a8a8a8;border-bottom:none;border-radius:5px 5px 0 0"></div>
<div class="a " style="left:178.7px;top:971.4px;width:157.4px;height:40.0px;background:#c40000;border-radius:4px;box-shadow:0 0 2px rgba(0,0,0,.5)"></div>
<span class="t" style="left:246.8px;top:1020.3px;font-size:10.5px;line-height:10.5px;color:#262626;font-weight:bold;-webkit-text-stroke:0;opacity:.85;">Red</span>
<div class="a " style="left:344.1px;top:966.0px;width:167.7px;height:72.0px;background:linear-gradient(#a0a0a0,#8a8a8a 12%,#787878 50%,#6a6a6a 70%,#585858 96%);border:1.5px solid #a8a8a8;border-bottom:none;border-radius:5px 5px 0 0"></div>
<div class="a " style="left:349.7px;top:971.4px;width:157.4px;height:40.0px;background:#00c400;border-radius:4px;box-shadow:0 0 2px rgba(0,0,0,.5)"></div>
<span class="t" style="left:412.6px;top:1020.3px;font-size:10.5px;line-height:10.5px;color:#262626;font-weight:bold;-webkit-text-stroke:0;opacity:.85;">Green</span>
<div class="a " style="left:515.2px;top:966.0px;width:167.7px;height:72.0px;background:linear-gradient(#a0a0a0,#8a8a8a 12%,#787878 50%,#6a6a6a 70%,#585858 96%);border:1.5px solid #a8a8a8;border-bottom:none;border-radius:5px 5px 0 0"></div>
<div class="a " style="left:520.8px;top:971.4px;width:157.4px;height:40.0px;background:#0000c4;border-radius:4px;box-shadow:0 0 2px rgba(0,0,0,.5)"></div>
<span class="t" style="left:587.5px;top:1020.3px;font-size:10.5px;line-height:10.5px;color:#262626;font-weight:bold;-webkit-text-stroke:0;opacity:.85;">Blue</span>
<div class="a " style="left:686.2px;top:966.0px;width:167.7px;height:72.0px;background:linear-gradient(#a0a0a0,#8a8a8a 12%,#787878 50%,#6a6a6a 70%,#585858 96%);border:1.5px solid #a8a8a8;border-bottom:none;border-radius:5px 5px 0 0"></div>
<div class="a " style="left:691.8px;top:971.4px;width:157.4px;height:40.0px;background:#00c4c4;border-radius:4px;box-shadow:0 0 2px rgba(0,0,0,.5)"></div>
<span class="t" style="left:757.1px;top:1020.3px;font-size:10.5px;line-height:10.5px;color:#262626;font-weight:bold;-webkit-text-stroke:0;opacity:.85;">Cyan</span>
<div class="a " style="left:857.2px;top:966.0px;width:167.7px;height:72.0px;background:linear-gradient(#a0a0a0,#8a8a8a 12%,#787878 50%,#6a6a6a 70%,#585858 96%);border:1.5px solid #a8a8a8;border-bottom:none;border-radius:5px 5px 0 0"></div>
<div class="a " style="left:862.9px;top:971.4px;width:157.4px;height:40.0px;background:#c400c4;border-radius:4px;box-shadow:0 0 2px rgba(0,0,0,.5)"></div>
<span class="t" style="left:919.7px;top:1020.3px;font-size:10.5px;line-height:10.5px;color:#262626;font-weight:bold;-webkit-text-stroke:0;opacity:.85;">Magenta</span>
<div class="a " style="left:1028.3px;top:966.0px;width:167.7px;height:72.0px;background:linear-gradient(#a0a0a0,#8a8a8a 12%,#787878 50%,#6a6a6a 70%,#585858 96%);border:1.5px solid #a8a8a8;border-bottom:none;border-radius:5px 5px 0 0"></div>
<div class="a " style="left:1033.9px;top:971.4px;width:157.4px;height:40.0px;background:#c4c400;border-radius:4px;box-shadow:0 0 2px rgba(0,0,0,.5)"></div>
<span class="t" style="left:1095.7px;top:1020.3px;font-size:10.5px;line-height:10.5px;color:#262626;font-weight:bold;-webkit-text-stroke:0;opacity:.85;">Yellow</span>
<div class="a " style="left:1199.6px;top:966.0px;width:167.4px;height:72.0px;background:linear-gradient(#161616,#1e1e1e 60%,#2e2e2e);border-radius:6px 6px 0 0"></div>
<div class="a " style="left:1204.6px;top:970.8px;width:157.3px;height:41.2px;background:#fff;border-radius:4px"></div>
<span class="t" style="left:1269.3px;top:1020.1px;font-size:10.5px;line-height:10.5px;color:#f4f4f4;font-weight:bold;-webkit-text-stroke:0;">100W</span>
<div class="a " style="left:1556.8px;top:966.0px;width:53.5px;height:20.0px;background:linear-gradient(#a2a2a2,#8e8e8e 50%,#7a7a7a);border:1px solid #a8a8a8;border-radius:5px 5px 0 0;"></div>
<div class="a " style="left:1556.8px;top:986.0px;width:53.5px;height:54.0px;background:linear-gradient(#a2a2a2,#8e8e8e 50%,#7a7a7a);border:1px solid #a8a8a8;border-radius:0;"></div>
<div class="a " style="left:1612.9px;top:966.0px;width:51.5px;height:32.8px;background:linear-gradient(#a2a2a2,#8e8e8e 50%,#7a7a7a);border:1px solid #a8a8a8;border-radius:0;"></div>
<div class="a " style="left:1665.4px;top:966.0px;width:49.0px;height:32.8px;background:linear-gradient(#a2a2a2,#8e8e8e 50%,#7a7a7a);border:1px solid #a8a8a8;border-radius:0;"></div>
<div class="a " style="left:1715.6px;top:966.0px;width:49.2px;height:32.8px;background:linear-gradient(#a2a2a2,#8e8e8e 50%,#7a7a7a);border:1px solid #a8a8a8;border-radius:0;"></div>
<div class="a " style="left:1765.8px;top:966.0px;width:49.5px;height:32.8px;background:linear-gradient(#a2a2a2,#8e8e8e 50%,#7a7a7a);border:1px solid #a8a8a8;border-radius:0;"></div>
<div class="a " style="left:1816.8px;top:966.0px;width:49.6px;height:32.8px;background:linear-gradient(#a2a2a2,#8e8e8e 50%,#7a7a7a);border:1px solid #a8a8a8;border-radius:0;"></div>
<div class="a " style="left:1612.9px;top:1000.0px;width:152.1px;height:40.0px;background:linear-gradient(#a2a2a2,#8e8e8e 50%,#7a7a7a);border:1px solid #a8a8a8;border-radius:4px 0 0 0;"></div>
<div class="a " style="left:1765.8px;top:1000.0px;width:152.7px;height:40.0px;background:linear-gradient(#a2a2a2,#8e8e8e 50%,#7a7a7a);border:1px solid #a8a8a8;border-radius:0 4px 0 0;"></div>
<div class="a " style="left:1867.0px;top:966.0px;width:53.0px;height:34.0px;background:linear-gradient(#262626,#343434)"></div>
<svg width="1920" height="1035"></svg>
<svg width="1920" height="1035"><defs><linearGradient id="cg3" x1="0" y1="0" x2="0" y2="1"><stop offset="0" stop-color="#747474"/><stop offset="1" stop-color="#acacac"/></linearGradient><linearGradient id="sq3" x1="0" y1="0" x2="0" y2="1"><stop offset="0" stop-color="#c6c6c6"/><stop offset=".5" stop-color="#b4b4b4"/><stop offset=".52" stop-color="#9c9c9c"/><stop offset="1" stop-color="#929292"/></linearGradient></defs><circle cx="1638.7" cy="982.3" r="10.5" fill="url(#cg3)" opacity=".8"/><circle cx="1689.9" cy="982.3" r="10.5" fill="url(#cg3)" opacity=".8"/><circle cx="1740.2" cy="982.3" r="10.5" fill="url(#cg3)" opacity=".8"/><circle cx="1790.5" cy="982.3" r="10.5" fill="url(#cg3)" opacity=".8"/><circle cx="1841.6" cy="982.3" r="10.5" fill="url(#cg3)" opacity=".8"/><rect x="1634.4" y="978.0" width="8.6" height="8.6" fill="#2e2e2e"/><path d="M1686.7 977.0999999999999l8.4 5.2-8.4 5.2z" fill="#2e2e2e"/><path d="M1738.0 977.3h-2.3v10h2.3M1742.4 977.3h2.3v10h-2.3M1738.0 982.3h4.4" stroke="#2e2e2e" stroke-width="1.5" fill="none"/><path d="M1790.5 982.3c-1.6-3.4-6.3-3.4-6.3 0s4.7 3.4 6.3 0c1.6-3.4 6.3-3.4 6.3 0s-4.7 3.4-6.3 0z" stroke="#2e2e2e" stroke-width="1.5" fill="none"/><path d="M1836.6 981.3a5.2 5.2 0 0 1 9-2.6M1846.6 983.3a5.2 5.2 0 0 1-9 2.6" stroke="#2e2e2e" stroke-width="2.2" fill="none"/><path d="M1847.2 976.3v4.6h-4.6zM1836.0 988.3v-4.6h4.6z" fill="#2e2e2e"/><circle cx="1894.5" cy="982.5" r="11" fill="#2c2c2c"/><path d="M1575 980a8.5 8 0 0 1 17 0z" fill="url(#cg3)" opacity=".85"/><path d="M1577.6 978.2l6-4.6 6 4.6z" fill="#2c2c2c"/><rect x="1567" y="993.8" width="33.2" height="33.4" rx="4.5" fill="url(#sq3)" stroke="#1e1e1e" stroke-width="2.6"/><rect x="1576.6" y="1003.5" width="15.3" height="14" fill="#060606"/><rect x="1576.6" y="1003.5" width="15.3" height="6" fill="#2a2a2a"/><circle cx="1647" cy="1017.4" r="10.5" fill="url(#cg3)" opacity=".8"/><circle cx="1887.5" cy="1017.4" r="10.5" fill="url(#cg3)" opacity=".8"/><path d="M1646.5 1012.5l-4.5 5 4.5 5M1652 1012.5l-4.5 5 4.5 5" stroke="#444" stroke-width="1.9" fill="none"/><path d="M1883 1012.5l4.5 5-4.5 5M1888.5 1012.5l4.5 5-4.5 5" stroke="#555" stroke-width="1.8" fill="none"/></svg>
<span class="t" style="left:1676.6px;top:1006.0px;font-size:23px;line-height:23px;color:#333;transform:scaleX(1.1050);-webkit-text-stroke:.3px #333;">Back</span>
<span class="t" style="left:1796.4px;top:1006.0px;font-size:23px;line-height:23px;color:#333;transform:scaleX(1.2370);-webkit-text-stroke:.3px #333;">Next</span>
</body></html>
